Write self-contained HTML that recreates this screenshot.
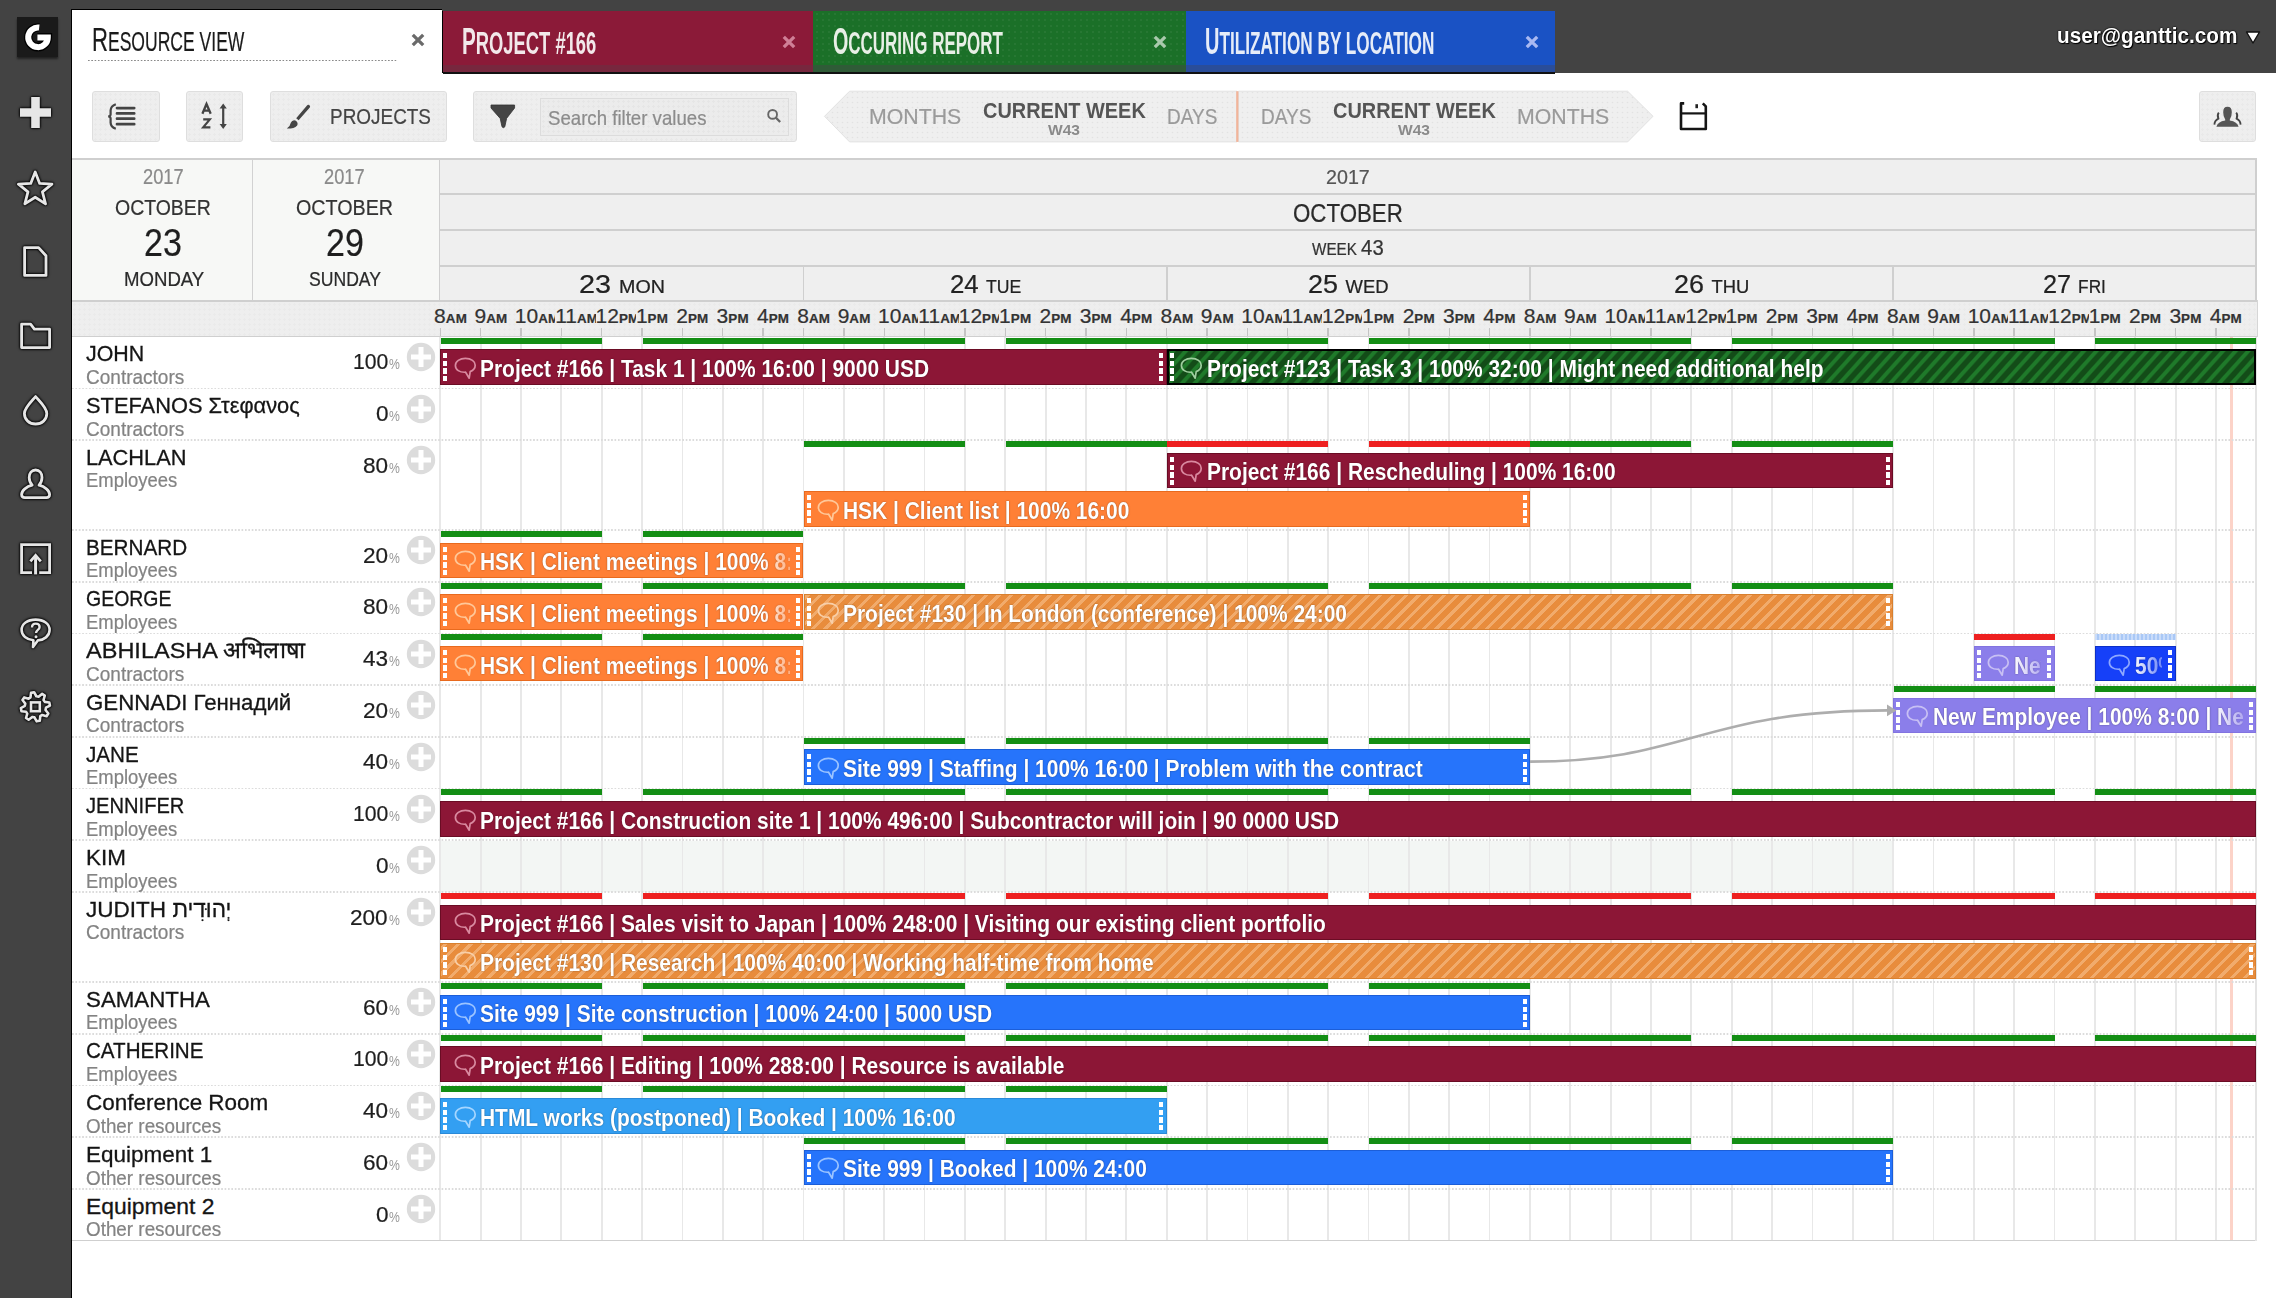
<!DOCTYPE html>
<html><head><meta charset="utf-8"><title>Ganttic Resource view</title>
<style>
html,body{margin:0;padding:0;width:2276px;height:1298px;overflow:hidden;background:#fff;font-family:"Liberation Sans", sans-serif;}
</style></head><body>
<div style="position:absolute;left:0.00px;top:0.00px;width:2276.00px;height:73.00px;background:#434343"></div>
<div style="position:absolute;left:0.00px;top:0.00px;width:72.00px;height:1298.00px;background:#434343"></div>
<div style="position:absolute;left:70.50px;top:9.00px;width:1.60px;height:1289.00px;background:#000"></div>
<div style="position:absolute;left:17.00px;top:17.00px;width:41.00px;height:40.00px;background:#1a1a1a;box-shadow:0 2px 2px rgba(0,0,0,.5)"></div>
<svg style="position:absolute;left:17px;top:17px" width="41" height="40" viewBox="0 0 41 40">
<path d="M22.2 10.6 A9.8 9.8 0 1 0 30.8 20.4 L20.4 20.4" fill="none" stroke="#000" stroke-width="8.6" stroke-linecap="butt"/>
<path d="M22.2 10.6 A9.8 9.8 0 1 0 30.8 20.4 L20.4 20.4" fill="none" stroke="#fff" stroke-width="6" stroke-linecap="butt"/>
</svg>
<div style="position:absolute;left:72.00px;top:9.00px;width:369.50px;height:64.00px;background:#fff;border-top:1.5px solid #000"></div>
<div style="position:absolute;left:441.50px;top:11.00px;width:1.50px;height:62.00px;background:#000"></div>
<div style="position:absolute;left:443.00px;top:11.00px;width:370.00px;height:62.00px;background:#8b1a38"></div>
<div style="position:absolute;left:443.00px;top:64.50px;width:370.00px;height:8.00px;background:#732a40;opacity:.85"></div>
<div style="position:absolute;left:813.00px;top:11.00px;width:373.00px;height:62.00px;background:#1b7028"></div>
<div style="position:absolute;left:813.00px;top:64.50px;width:373.00px;height:8.00px;background:#33573a;opacity:.85"></div>
<div style="position:absolute;left:1186.00px;top:11.00px;width:369.00px;height:62.00px;background:#1a52c4"></div>
<div style="position:absolute;left:1186.00px;top:64.50px;width:369.00px;height:8.00px;background:#2e4c92;opacity:.85"></div>
<div style="position:absolute;left:443.00px;top:72.00px;width:1112.00px;height:1.50px;background:#111"></div>
<div style="position:absolute;left:814.00px;top:11.00px;width:370.00px;height:53.00px;background-image:radial-gradient(rgba(255,255,255,.05) 1px, transparent 1.3px);background-size:6px 6px"></div>
<div style="position:absolute;left:88.00px;top:59.50px;width:310.00px;height:1.50px;background-image:linear-gradient(90deg,#8a8a8a 50%,transparent 50%);background-size:3.3px 1.5px"></div>
<div style="position:absolute;left:91.80px;top:22.00px;white-space:nowrap;line-height:1;font-size:34px;font-weight:normal;color:#1a1a1a;transform-origin:0 0;transform:scaleX(0.6496);;-webkit-text-stroke:0.22px #1a1a1a"><span style="font-size:34px">R</span><span style="font-size:27px">ESOURCE VIEW</span></div>
<div style="position:absolute;left:462.00px;top:23.80px;white-space:nowrap;line-height:1;font-size:36px;font-weight:bold;color:#f2e8ea;transform-origin:0 0;transform:scaleX(0.5742);"><span style="font-size:36px">P</span><span style="font-size:32px">ROJECT #166</span></div>
<div style="position:absolute;left:833.20px;top:24.00px;white-space:nowrap;line-height:1;font-size:36px;font-weight:bold;color:#e8efe6;transform-origin:0 0;transform:scaleX(0.5469);"><span style="font-size:36px">O</span><span style="font-size:31px">CCURING REPORT</span></div>
<div style="position:absolute;left:1205.20px;top:24.00px;white-space:nowrap;line-height:1;font-size:36px;font-weight:bold;color:#e6ecf8;transform-origin:0 0;transform:scaleX(0.5546);"><span style="font-size:36px">U</span><span style="font-size:31px">TILIZATION BY LOCATION</span></div>
<svg style="position:absolute;left:407.8px;top:30.3px" width="20" height="20" viewBox="0 0 20 20"><path d="M4.8 4.8 L15.2 15.2 M15.2 4.8 L4.8 15.2" stroke="#6a6a6a" stroke-width="3.3" stroke-linecap="butt"/></svg>
<svg style="position:absolute;left:779.1px;top:32.0px" width="20" height="20" viewBox="0 0 20 20"><path d="M4.8 4.8 L15.2 15.2 M15.2 4.8 L4.8 15.2" stroke="#cf7f96" stroke-width="3.3" stroke-linecap="butt"/></svg>
<svg style="position:absolute;left:1150.2px;top:32.0px" width="20" height="20" viewBox="0 0 20 20"><path d="M4.8 4.8 L15.2 15.2 M15.2 4.8 L4.8 15.2" stroke="#a9c9ac" stroke-width="3.3" stroke-linecap="butt"/></svg>
<svg style="position:absolute;left:1522.2px;top:32.0px" width="20" height="20" viewBox="0 0 20 20"><path d="M4.8 4.8 L15.2 15.2 M15.2 4.8 L4.8 15.2" stroke="#a9b9f2" stroke-width="3.3" stroke-linecap="butt"/></svg>
<div style="position:absolute;left:2056.50px;top:26.20px;white-space:nowrap;line-height:1;font-size:21.5px;font-weight:bold;color:#fff;transform-origin:0 0;transform:scaleX(0.9650);text-shadow:0 0 1.5px #000,0 0 1.5px #000,1px 1px 1px #000">user@ganttic.com</div>
<svg style="position:absolute;left:2244px;top:30px" width="18" height="15" viewBox="0 0 18 15"><path d="M2.5 2 L15.5 2 L9 13 Z" fill="#fff" stroke="#111" stroke-width="1.4" stroke-linejoin="round"/></svg>
<div style="position:absolute;left:92.00px;top:91.00px;width:68.00px;height:51.00px;background:#eeeeee;border:1px solid #dedede;border-radius:3px;box-sizing:border-box;background-image:radial-gradient(rgba(0,0,0,.02) 1px, transparent 1.3px);background-size:5px 5px"></div>
<div style="position:absolute;left:185.50px;top:91.00px;width:57.50px;height:51.00px;background:#eeeeee;border:1px solid #dedede;border-radius:3px;box-sizing:border-box;background-image:radial-gradient(rgba(0,0,0,.02) 1px, transparent 1.3px);background-size:5px 5px"></div>
<div style="position:absolute;left:269.50px;top:91.00px;width:177.50px;height:51.00px;background:#eeeeee;border:1px solid #dedede;border-radius:3px;box-sizing:border-box;background-image:radial-gradient(rgba(0,0,0,.02) 1px, transparent 1.3px);background-size:5px 5px"></div>
<div style="position:absolute;left:473.00px;top:91.00px;width:324.00px;height:50.50px;background:#eeeeee;border:1px solid #dedede;border-radius:3px;box-sizing:border-box;background-image:radial-gradient(rgba(0,0,0,.02) 1px, transparent 1.3px);background-size:5px 5px"></div>
<div style="position:absolute;left:539.50px;top:97.50px;width:249.50px;height:38.00px;background:#ececec;border:1px solid #dcdcdc;box-sizing:border-box;background-image:radial-gradient(rgba(0,0,0,.025) 1px, transparent 1.3px);background-size:5px 5px"></div>
<div style="position:absolute;left:2199.20px;top:91.00px;width:56.80px;height:50.50px;background:#eeeeee;border:1px solid #dedede;border-radius:3px;box-sizing:border-box;background-image:radial-gradient(rgba(0,0,0,.02) 1px, transparent 1.3px);background-size:5px 5px"></div>
<svg style="position:absolute;left:100px;top:98px" width="45" height="38" viewBox="100 98 45 38">
<path d="M115.8 104.2 Q110.8 106 110.6 110.5 L110.6 114.5 Q110.4 116.3 108.2 116.4 Q110.4 116.5 110.6 118.3 L110.6 122.6 Q110.8 127.2 115.8 128.8" fill="none" stroke="#444" stroke-width="2.2"/>
<path d="M117 108.1 H134.2 M117 113.4 H134.2 M117 118.7 H134.2 M117 124.2 H134.2" stroke="#444" stroke-width="2.7" stroke-linecap="round"/>
</svg>
<svg style="position:absolute;left:195px;top:98px" width="40" height="38" viewBox="195 98 40 38">
<path d="M202.4 113.8 L206.5 104 L210.7 113.8 M203.8 110.6 H209.3" fill="none" stroke="#444" stroke-width="2.3"/>
<path d="M203.2 119.4 H209.8 L203.2 127.4 H210.4" fill="none" stroke="#444" stroke-width="2.2"/>
<path d="M223.2 107 V125.5" stroke="#444" stroke-width="2.2"/>
<path d="M219.6 108.6 L223.2 103.6 L226.8 108.6 Z M219.6 123.9 L223.2 128.9 L226.8 123.9 Z" fill="#444"/>
</svg>
<svg style="position:absolute;left:280px;top:98px" width="40" height="38" viewBox="280 98 40 38">
<path d="M309.2 105 Q310.8 106.2 309.8 107.6 L298.6 120.2 L296.2 118.2 L307 105.6 Q308 104.2 309.2 105 Z" fill="#444"/>
<path d="M295.4 120.4 Q298.6 122.2 297.2 125.4 Q294.2 128.8 286.8 128.6 Q290.2 126.6 290.8 122.8 Q292 119.6 295.4 120.4 Z" fill="#444"/>
</svg>
<div style="position:absolute;left:330.00px;top:106.10px;white-space:nowrap;line-height:1;font-size:21.8px;font-weight:normal;color:#444;transform-origin:0 0;transform:scaleX(0.8687);;-webkit-text-stroke:0.22px #444">PROJECTS</div>
<svg style="position:absolute;left:485px;top:98px" width="35" height="36" viewBox="485 98 35 36">
<path d="M491 105 H514.6 V108 L506.6 118.4 L504.8 126.8 Q503.4 128.6 502 126.8 L500.2 118.4 L491 108 Z" fill="#444" stroke="#333" stroke-width="0.8" stroke-linejoin="round"/>
</svg>
<div style="position:absolute;left:547.90px;top:107.60px;white-space:nowrap;line-height:1;font-size:20.2px;font-weight:normal;color:#8c8c8c;transform-origin:0 0;transform:scaleX(0.9232);;-webkit-text-stroke:0.22px #8c8c8c">Search filter values</div>
<svg style="position:absolute;left:762px;top:104px" width="24" height="24" viewBox="762 104 24 24">
<circle cx="772.6" cy="114.4" r="4.4" fill="none" stroke="#666" stroke-width="1.9"/>
<path d="M775.8 117.6 L780.2 122" stroke="#666" stroke-width="2.2"/>
</svg>
<svg style="position:absolute;left:820px;top:88px" width="840" height="58" viewBox="820 88 840 58">
<defs><pattern id="dots" width="5" height="5" patternUnits="userSpaceOnUse"><rect width="5" height="5" fill="#efefef"/><circle cx="2.5" cy="2.5" r=".8" fill="#e2e2e2"/></pattern></defs>
<path d="M824.5 116.3 L849.6 91.2 H1237 V141.9 H849.6 Z" fill="url(#dots)" stroke="#e2e2e2" stroke-width="1"/>
<path d="M1238.5 91.2 H1627.6 L1653 116.3 L1627.6 141.9 H1238.5 Z" fill="url(#dots)" stroke="#e2e2e2" stroke-width="1"/>
<rect x="1236.2" y="91.2" width="2.2" height="50.7" fill="#f2b49a"/>
</svg>
<div style="position:absolute;left:868.80px;top:105.60px;white-space:nowrap;line-height:1;font-size:21.8px;font-weight:normal;color:#9a9a9a;transform-origin:0 0;transform:scaleX(0.9761);;-webkit-text-stroke:0.22px #9a9a9a">MONTHS</div>
<div style="position:absolute;left:982.80px;top:99.70px;white-space:nowrap;line-height:1;font-size:21.8px;font-weight:bold;color:#555;transform-origin:0 0;transform:scaleX(0.9145);">CURRENT WEEK</div>
<div style="position:absolute;left:1047.90px;top:123.00px;white-space:nowrap;line-height:1;font-size:14.5px;font-weight:bold;color:#8a8a8a;transform-origin:0 0;transform:scaleX(1.0728);">W43</div>
<div style="position:absolute;left:1166.80px;top:105.60px;white-space:nowrap;line-height:1;font-size:21.8px;font-weight:normal;color:#9a9a9a;transform-origin:0 0;transform:scaleX(0.8727);;-webkit-text-stroke:0.22px #9a9a9a">DAYS</div>
<div style="position:absolute;left:1260.80px;top:105.60px;white-space:nowrap;line-height:1;font-size:21.8px;font-weight:normal;color:#9a9a9a;transform-origin:0 0;transform:scaleX(0.8727);;-webkit-text-stroke:0.22px #9a9a9a">DAYS</div>
<div style="position:absolute;left:1332.80px;top:99.70px;white-space:nowrap;line-height:1;font-size:21.8px;font-weight:bold;color:#555;transform-origin:0 0;transform:scaleX(0.9145);">CURRENT WEEK</div>
<div style="position:absolute;left:1397.80px;top:123.00px;white-space:nowrap;line-height:1;font-size:14.5px;font-weight:bold;color:#8a8a8a;transform-origin:0 0;transform:scaleX(1.0728);">W43</div>
<div style="position:absolute;left:1516.80px;top:105.60px;white-space:nowrap;line-height:1;font-size:21.8px;font-weight:normal;color:#9a9a9a;transform-origin:0 0;transform:scaleX(0.9761);;-webkit-text-stroke:0.22px #9a9a9a">MONTHS</div>
<svg style="position:absolute;left:1675px;top:98px" width="36" height="36" viewBox="1675 98 36 36">
<path d="M1684.2 103.4 H1681 V129 H1705.8 V106.4 L1702.8 103.4" fill="none" stroke="#151515" stroke-width="2.6" stroke-linejoin="round"/>
<path d="M1681 113.4 H1705.8" stroke="#151515" stroke-width="2.2"/>
<rect x="1695.4" y="104.2" width="2.6" height="4" fill="#222"/>
</svg>
<svg style="position:absolute;left:2210px;top:100px" width="36" height="32" viewBox="2210 100 36 32">
<path d="M2227.5 106.8 Q2231.8 106.8 2231.8 112.2 Q2231.8 117 2229.8 119.4 L2229.8 120.6 Q2237.4 121.8 2238.6 126.8 H2216.4 Q2217.6 121.8 2225.2 120.6 L2225.2 119.4 Q2223.2 117 2223.2 112.2 Q2223.2 106.8 2227.5 106.8 Z" fill="#555"/>
<path d="M2218.8 112.6 Q2216.8 115 2218.4 118.6 Q2214.6 120.4 2214.4 124.6" fill="none" stroke="#444" stroke-width="1.8"/>
<path d="M2236.2 112.6 Q2238.2 115 2236.6 118.6 Q2240.4 120.4 2240.6 124.6" fill="none" stroke="#444" stroke-width="1.8"/>
</svg>
<div style="position:absolute;left:72.00px;top:158.40px;width:2184.00px;height:1.60px;background:#cfcfcf"></div>
<div style="position:absolute;left:72.00px;top:160.00px;width:367.00px;height:140.60px;background:#f7f8f6"></div>
<div style="position:absolute;left:251.80px;top:160.00px;width:1.60px;height:140.60px;background:#d2d2d2"></div>
<div style="position:absolute;left:438.60px;top:158.40px;width:1.60px;height:142.60px;background:#cfcfcf"></div>
<div style="position:absolute;left:440.20px;top:160.00px;width:1815.80px;height:141.00px;background:#efefef"></div>
<div style="position:absolute;left:440.20px;top:193.40px;width:1815.80px;height:1.60px;background:#cfcfcf"></div>
<div style="position:absolute;left:440.20px;top:229.30px;width:1815.80px;height:1.60px;background:#cfcfcf"></div>
<div style="position:absolute;left:440.20px;top:265.00px;width:1815.80px;height:1.60px;background:#cfcfcf"></div>
<div style="position:absolute;left:2255.40px;top:158.40px;width:1.60px;height:143.00px;background:#cfcfcf"></div>
<div style="position:absolute;left:802.70px;top:266.60px;width:1.60px;height:34.40px;background:#cfcfcf"></div>
<div style="position:absolute;left:1165.91px;top:266.60px;width:1.60px;height:34.40px;background:#cfcfcf"></div>
<div style="position:absolute;left:1529.11px;top:266.60px;width:1.60px;height:34.40px;background:#cfcfcf"></div>
<div style="position:absolute;left:1892.32px;top:266.60px;width:1.60px;height:34.40px;background:#cfcfcf"></div>
<div style="position:absolute;left:72.00px;top:300.40px;width:2186.00px;height:1.60px;background:#cfcfcf"></div>
<div style="position:absolute;left:72.00px;top:302.00px;width:2186.00px;height:34.00px;background:#eeeeee;background-image:radial-gradient(rgba(0,0,0,.014) 1px, transparent 1.3px);background-size:5px 5px"></div>
<div style="position:absolute;left:72.00px;top:335.80px;width:2186.00px;height:1.60px;background:#cfcfcf"></div>
<div style="position:absolute;left:2256.50px;top:300.40px;width:1.50px;height:37.00px;background:#d6d6d6"></div>
<div style="position:absolute;left:439.60px;top:328.40px;width:1.40px;height:7.20px;background:#c4c4c4"></div>
<div style="position:absolute;left:479.96px;top:328.40px;width:1.40px;height:7.20px;background:#c4c4c4"></div>
<div style="position:absolute;left:520.31px;top:328.40px;width:1.40px;height:7.20px;background:#c4c4c4"></div>
<div style="position:absolute;left:560.67px;top:328.40px;width:1.40px;height:7.20px;background:#c4c4c4"></div>
<div style="position:absolute;left:601.02px;top:328.40px;width:1.40px;height:7.20px;background:#c4c4c4"></div>
<div style="position:absolute;left:641.38px;top:328.40px;width:1.40px;height:7.20px;background:#c4c4c4"></div>
<div style="position:absolute;left:681.74px;top:328.40px;width:1.40px;height:7.20px;background:#c4c4c4"></div>
<div style="position:absolute;left:722.09px;top:328.40px;width:1.40px;height:7.20px;background:#c4c4c4"></div>
<div style="position:absolute;left:762.45px;top:328.40px;width:1.40px;height:7.20px;background:#c4c4c4"></div>
<div style="position:absolute;left:802.80px;top:328.40px;width:1.40px;height:7.20px;background:#c4c4c4"></div>
<div style="position:absolute;left:843.16px;top:328.40px;width:1.40px;height:7.20px;background:#c4c4c4"></div>
<div style="position:absolute;left:883.52px;top:328.40px;width:1.40px;height:7.20px;background:#c4c4c4"></div>
<div style="position:absolute;left:923.87px;top:328.40px;width:1.40px;height:7.20px;background:#c4c4c4"></div>
<div style="position:absolute;left:964.23px;top:328.40px;width:1.40px;height:7.20px;background:#c4c4c4"></div>
<div style="position:absolute;left:1004.58px;top:328.40px;width:1.40px;height:7.20px;background:#c4c4c4"></div>
<div style="position:absolute;left:1044.94px;top:328.40px;width:1.40px;height:7.20px;background:#c4c4c4"></div>
<div style="position:absolute;left:1085.30px;top:328.40px;width:1.40px;height:7.20px;background:#c4c4c4"></div>
<div style="position:absolute;left:1125.65px;top:328.40px;width:1.40px;height:7.20px;background:#c4c4c4"></div>
<div style="position:absolute;left:1166.01px;top:328.40px;width:1.40px;height:7.20px;background:#c4c4c4"></div>
<div style="position:absolute;left:1206.36px;top:328.40px;width:1.40px;height:7.20px;background:#c4c4c4"></div>
<div style="position:absolute;left:1246.72px;top:328.40px;width:1.40px;height:7.20px;background:#c4c4c4"></div>
<div style="position:absolute;left:1287.08px;top:328.40px;width:1.40px;height:7.20px;background:#c4c4c4"></div>
<div style="position:absolute;left:1327.43px;top:328.40px;width:1.40px;height:7.20px;background:#c4c4c4"></div>
<div style="position:absolute;left:1367.79px;top:328.40px;width:1.40px;height:7.20px;background:#c4c4c4"></div>
<div style="position:absolute;left:1408.14px;top:328.40px;width:1.40px;height:7.20px;background:#c4c4c4"></div>
<div style="position:absolute;left:1448.50px;top:328.40px;width:1.40px;height:7.20px;background:#c4c4c4"></div>
<div style="position:absolute;left:1488.86px;top:328.40px;width:1.40px;height:7.20px;background:#c4c4c4"></div>
<div style="position:absolute;left:1529.21px;top:328.40px;width:1.40px;height:7.20px;background:#c4c4c4"></div>
<div style="position:absolute;left:1569.57px;top:328.40px;width:1.40px;height:7.20px;background:#c4c4c4"></div>
<div style="position:absolute;left:1609.92px;top:328.40px;width:1.40px;height:7.20px;background:#c4c4c4"></div>
<div style="position:absolute;left:1650.28px;top:328.40px;width:1.40px;height:7.20px;background:#c4c4c4"></div>
<div style="position:absolute;left:1690.64px;top:328.40px;width:1.40px;height:7.20px;background:#c4c4c4"></div>
<div style="position:absolute;left:1730.99px;top:328.40px;width:1.40px;height:7.20px;background:#c4c4c4"></div>
<div style="position:absolute;left:1771.35px;top:328.40px;width:1.40px;height:7.20px;background:#c4c4c4"></div>
<div style="position:absolute;left:1811.70px;top:328.40px;width:1.40px;height:7.20px;background:#c4c4c4"></div>
<div style="position:absolute;left:1852.06px;top:328.40px;width:1.40px;height:7.20px;background:#c4c4c4"></div>
<div style="position:absolute;left:1892.42px;top:328.40px;width:1.40px;height:7.20px;background:#c4c4c4"></div>
<div style="position:absolute;left:1932.77px;top:328.40px;width:1.40px;height:7.20px;background:#c4c4c4"></div>
<div style="position:absolute;left:1973.13px;top:328.40px;width:1.40px;height:7.20px;background:#c4c4c4"></div>
<div style="position:absolute;left:2013.48px;top:328.40px;width:1.40px;height:7.20px;background:#c4c4c4"></div>
<div style="position:absolute;left:2053.84px;top:328.40px;width:1.40px;height:7.20px;background:#c4c4c4"></div>
<div style="position:absolute;left:2094.20px;top:328.40px;width:1.40px;height:7.20px;background:#c4c4c4"></div>
<div style="position:absolute;left:2134.55px;top:328.40px;width:1.40px;height:7.20px;background:#c4c4c4"></div>
<div style="position:absolute;left:2174.91px;top:328.40px;width:1.40px;height:7.20px;background:#c4c4c4"></div>
<div style="position:absolute;left:2215.26px;top:328.40px;width:1.40px;height:7.20px;background:#c4c4c4"></div>
<div style="position:absolute;left:143.00px;top:167.10px;white-space:nowrap;line-height:1;font-size:21.4px;font-weight:normal;color:#8a8a8a;transform-origin:0 0;transform:scaleX(0.8531);;-webkit-text-stroke:0.22px #8a8a8a">2017</div>
<div style="position:absolute;left:115.40px;top:195.60px;white-space:nowrap;line-height:1;font-size:22.8px;font-weight:normal;color:#333;transform-origin:0 0;transform:scaleX(0.8537);;-webkit-text-stroke:0.22px #333">OCTOBER</div>
<div style="position:absolute;left:144.00px;top:224.10px;white-space:nowrap;line-height:1;font-size:38px;font-weight:normal;color:#1e1e1e;transform-origin:0 0;transform:scaleX(0.8940);;-webkit-text-stroke:0.22px #1e1e1e">23</div>
<div style="position:absolute;left:123.70px;top:268.60px;white-space:nowrap;line-height:1;font-size:20px;font-weight:normal;color:#2a2a2a;transform-origin:0 0;transform:scaleX(0.9303);;-webkit-text-stroke:0.22px #2a2a2a">MONDAY</div>
<div style="position:absolute;left:323.80px;top:167.10px;white-space:nowrap;line-height:1;font-size:21.4px;font-weight:normal;color:#8a8a8a;transform-origin:0 0;transform:scaleX(0.8531);;-webkit-text-stroke:0.22px #8a8a8a">2017</div>
<div style="position:absolute;left:296.00px;top:195.60px;white-space:nowrap;line-height:1;font-size:22.8px;font-weight:normal;color:#333;transform-origin:0 0;transform:scaleX(0.8635);;-webkit-text-stroke:0.22px #333">OCTOBER</div>
<div style="position:absolute;left:325.70px;top:224.10px;white-space:nowrap;line-height:1;font-size:38px;font-weight:normal;color:#1e1e1e;transform-origin:0 0;transform:scaleX(0.8940);;-webkit-text-stroke:0.22px #1e1e1e">29</div>
<div style="position:absolute;left:309.00px;top:268.60px;white-space:nowrap;line-height:1;font-size:20px;font-weight:normal;color:#2a2a2a;transform-origin:0 0;transform:scaleX(0.8794);;-webkit-text-stroke:0.22px #2a2a2a">SUNDAY</div>
<div style="position:absolute;left:1326.00px;top:166.60px;white-space:nowrap;line-height:1;font-size:20.3px;font-weight:normal;color:#555;transform-origin:0 0;transform:scaleX(0.9706);;-webkit-text-stroke:0.22px #555">2017</div>
<div style="position:absolute;left:1293.00px;top:200.60px;white-space:nowrap;line-height:1;font-size:25.5px;font-weight:normal;color:#2a2a2a;transform-origin:0 0;transform:scaleX(0.8739);;-webkit-text-stroke:0.22px #2a2a2a">OCTOBER</div>
<div style="position:absolute;left:1312.00px;top:238.30px;white-space:nowrap;line-height:1;font-size:21.3px;font-weight:normal;color:#333;transform-origin:0 0;transform:scaleX(0.9526);;-webkit-text-stroke:0.22px #333"><span style="font-size:16px">WEEK </span>43</div>
<div style="position:absolute;left:578.90px;top:270.60px;white-space:nowrap;line-height:1;font-size:26.5px;font-weight:normal;color:#222;transform-origin:0 0;transform:scaleX(1.0877);;-webkit-text-stroke:0.22px #222">23 <span style="font-size:18.1px">MON</span></div>
<div style="position:absolute;left:949.51px;top:270.60px;white-space:nowrap;line-height:1;font-size:26.5px;font-weight:normal;color:#222;transform-origin:0 0;transform:scaleX(0.9749);;-webkit-text-stroke:0.22px #222">24 <span style="font-size:18.1px">TUE</span></div>
<div style="position:absolute;left:1308.06px;top:270.60px;white-space:nowrap;line-height:1;font-size:26.5px;font-weight:normal;color:#222;transform-origin:0 0;transform:scaleX(1.0182);;-webkit-text-stroke:0.22px #222">25 <span style="font-size:18.1px">WED</span></div>
<div style="position:absolute;left:1673.91px;top:270.60px;white-space:nowrap;line-height:1;font-size:26.5px;font-weight:normal;color:#222;transform-origin:0 0;transform:scaleX(1.0158);;-webkit-text-stroke:0.22px #222">26 <span style="font-size:18.1px">THU</span></div>
<div style="position:absolute;left:2043.27px;top:270.60px;white-space:nowrap;line-height:1;font-size:26.5px;font-weight:normal;color:#222;transform-origin:0 0;transform:scaleX(0.9530);;-webkit-text-stroke:0.22px #222">27 <span style="font-size:18.1px">FRI</span></div>
<div style="position:absolute;left:434.10px;top:298.70px;width:40.40px;height:31.00px;overflow:hidden;font-size:21px;font-weight:normal;color:#333;line-height:1;;-webkit-text-stroke:0.22px #333"><div style="position:absolute;left:0;top:6px;white-space:nowrap;transform-origin:0 0;">8<span style="font-size:13.4px;font-weight:bold;letter-spacing:.2px">AM</span></div></div>
<div style="position:absolute;left:474.46px;top:298.70px;width:40.40px;height:31.00px;overflow:hidden;font-size:21px;font-weight:normal;color:#333;line-height:1;;-webkit-text-stroke:0.22px #333"><div style="position:absolute;left:0;top:6px;white-space:nowrap;transform-origin:0 0;">9<span style="font-size:13.4px;font-weight:bold;letter-spacing:.2px">AM</span></div></div>
<div style="position:absolute;left:514.81px;top:298.70px;width:40.40px;height:31.00px;overflow:hidden;font-size:21px;font-weight:normal;color:#333;line-height:1;;-webkit-text-stroke:0.22px #333"><div style="position:absolute;left:0;top:6px;white-space:nowrap;transform-origin:0 0;">10<span style="font-size:13.4px;font-weight:bold;letter-spacing:.2px">AM</span></div></div>
<div style="position:absolute;left:555.17px;top:298.70px;width:40.40px;height:31.00px;overflow:hidden;font-size:21px;font-weight:normal;color:#333;line-height:1;;-webkit-text-stroke:0.22px #333"><div style="position:absolute;left:0;top:6px;white-space:nowrap;transform-origin:0 0;">11<span style="font-size:13.4px;font-weight:bold;letter-spacing:.2px">AM</span></div></div>
<div style="position:absolute;left:595.52px;top:298.70px;width:40.40px;height:31.00px;overflow:hidden;font-size:21px;font-weight:normal;color:#333;line-height:1;;-webkit-text-stroke:0.22px #333"><div style="position:absolute;left:0;top:6px;white-space:nowrap;transform-origin:0 0;">12<span style="font-size:13.4px;font-weight:bold;letter-spacing:.2px">PM</span></div></div>
<div style="position:absolute;left:635.88px;top:298.70px;width:40.40px;height:31.00px;overflow:hidden;font-size:21px;font-weight:normal;color:#333;line-height:1;;-webkit-text-stroke:0.22px #333"><div style="position:absolute;left:0;top:6px;white-space:nowrap;transform-origin:0 0;">1<span style="font-size:13.4px;font-weight:bold;letter-spacing:.2px">PM</span></div></div>
<div style="position:absolute;left:676.24px;top:298.70px;width:40.40px;height:31.00px;overflow:hidden;font-size:21px;font-weight:normal;color:#333;line-height:1;;-webkit-text-stroke:0.22px #333"><div style="position:absolute;left:0;top:6px;white-space:nowrap;transform-origin:0 0;">2<span style="font-size:13.4px;font-weight:bold;letter-spacing:.2px">PM</span></div></div>
<div style="position:absolute;left:716.59px;top:298.70px;width:40.40px;height:31.00px;overflow:hidden;font-size:21px;font-weight:normal;color:#333;line-height:1;;-webkit-text-stroke:0.22px #333"><div style="position:absolute;left:0;top:6px;white-space:nowrap;transform-origin:0 0;">3<span style="font-size:13.4px;font-weight:bold;letter-spacing:.2px">PM</span></div></div>
<div style="position:absolute;left:756.95px;top:298.70px;width:40.40px;height:31.00px;overflow:hidden;font-size:21px;font-weight:normal;color:#333;line-height:1;;-webkit-text-stroke:0.22px #333"><div style="position:absolute;left:0;top:6px;white-space:nowrap;transform-origin:0 0;">4<span style="font-size:13.4px;font-weight:bold;letter-spacing:.2px">PM</span></div></div>
<div style="position:absolute;left:797.30px;top:298.70px;width:40.40px;height:31.00px;overflow:hidden;font-size:21px;font-weight:normal;color:#333;line-height:1;;-webkit-text-stroke:0.22px #333"><div style="position:absolute;left:0;top:6px;white-space:nowrap;transform-origin:0 0;">8<span style="font-size:13.4px;font-weight:bold;letter-spacing:.2px">AM</span></div></div>
<div style="position:absolute;left:837.66px;top:298.70px;width:40.40px;height:31.00px;overflow:hidden;font-size:21px;font-weight:normal;color:#333;line-height:1;;-webkit-text-stroke:0.22px #333"><div style="position:absolute;left:0;top:6px;white-space:nowrap;transform-origin:0 0;">9<span style="font-size:13.4px;font-weight:bold;letter-spacing:.2px">AM</span></div></div>
<div style="position:absolute;left:878.02px;top:298.70px;width:40.40px;height:31.00px;overflow:hidden;font-size:21px;font-weight:normal;color:#333;line-height:1;;-webkit-text-stroke:0.22px #333"><div style="position:absolute;left:0;top:6px;white-space:nowrap;transform-origin:0 0;">10<span style="font-size:13.4px;font-weight:bold;letter-spacing:.2px">AM</span></div></div>
<div style="position:absolute;left:918.37px;top:298.70px;width:40.40px;height:31.00px;overflow:hidden;font-size:21px;font-weight:normal;color:#333;line-height:1;;-webkit-text-stroke:0.22px #333"><div style="position:absolute;left:0;top:6px;white-space:nowrap;transform-origin:0 0;">11<span style="font-size:13.4px;font-weight:bold;letter-spacing:.2px">AM</span></div></div>
<div style="position:absolute;left:958.73px;top:298.70px;width:40.40px;height:31.00px;overflow:hidden;font-size:21px;font-weight:normal;color:#333;line-height:1;;-webkit-text-stroke:0.22px #333"><div style="position:absolute;left:0;top:6px;white-space:nowrap;transform-origin:0 0;">12<span style="font-size:13.4px;font-weight:bold;letter-spacing:.2px">PM</span></div></div>
<div style="position:absolute;left:999.08px;top:298.70px;width:40.40px;height:31.00px;overflow:hidden;font-size:21px;font-weight:normal;color:#333;line-height:1;;-webkit-text-stroke:0.22px #333"><div style="position:absolute;left:0;top:6px;white-space:nowrap;transform-origin:0 0;">1<span style="font-size:13.4px;font-weight:bold;letter-spacing:.2px">PM</span></div></div>
<div style="position:absolute;left:1039.44px;top:298.70px;width:40.40px;height:31.00px;overflow:hidden;font-size:21px;font-weight:normal;color:#333;line-height:1;;-webkit-text-stroke:0.22px #333"><div style="position:absolute;left:0;top:6px;white-space:nowrap;transform-origin:0 0;">2<span style="font-size:13.4px;font-weight:bold;letter-spacing:.2px">PM</span></div></div>
<div style="position:absolute;left:1079.80px;top:298.70px;width:40.40px;height:31.00px;overflow:hidden;font-size:21px;font-weight:normal;color:#333;line-height:1;;-webkit-text-stroke:0.22px #333"><div style="position:absolute;left:0;top:6px;white-space:nowrap;transform-origin:0 0;">3<span style="font-size:13.4px;font-weight:bold;letter-spacing:.2px">PM</span></div></div>
<div style="position:absolute;left:1120.15px;top:298.70px;width:40.40px;height:31.00px;overflow:hidden;font-size:21px;font-weight:normal;color:#333;line-height:1;;-webkit-text-stroke:0.22px #333"><div style="position:absolute;left:0;top:6px;white-space:nowrap;transform-origin:0 0;">4<span style="font-size:13.4px;font-weight:bold;letter-spacing:.2px">PM</span></div></div>
<div style="position:absolute;left:1160.51px;top:298.70px;width:40.40px;height:31.00px;overflow:hidden;font-size:21px;font-weight:normal;color:#333;line-height:1;;-webkit-text-stroke:0.22px #333"><div style="position:absolute;left:0;top:6px;white-space:nowrap;transform-origin:0 0;">8<span style="font-size:13.4px;font-weight:bold;letter-spacing:.2px">AM</span></div></div>
<div style="position:absolute;left:1200.86px;top:298.70px;width:40.40px;height:31.00px;overflow:hidden;font-size:21px;font-weight:normal;color:#333;line-height:1;;-webkit-text-stroke:0.22px #333"><div style="position:absolute;left:0;top:6px;white-space:nowrap;transform-origin:0 0;">9<span style="font-size:13.4px;font-weight:bold;letter-spacing:.2px">AM</span></div></div>
<div style="position:absolute;left:1241.22px;top:298.70px;width:40.40px;height:31.00px;overflow:hidden;font-size:21px;font-weight:normal;color:#333;line-height:1;;-webkit-text-stroke:0.22px #333"><div style="position:absolute;left:0;top:6px;white-space:nowrap;transform-origin:0 0;">10<span style="font-size:13.4px;font-weight:bold;letter-spacing:.2px">AM</span></div></div>
<div style="position:absolute;left:1281.58px;top:298.70px;width:40.40px;height:31.00px;overflow:hidden;font-size:21px;font-weight:normal;color:#333;line-height:1;;-webkit-text-stroke:0.22px #333"><div style="position:absolute;left:0;top:6px;white-space:nowrap;transform-origin:0 0;">11<span style="font-size:13.4px;font-weight:bold;letter-spacing:.2px">AM</span></div></div>
<div style="position:absolute;left:1321.93px;top:298.70px;width:40.40px;height:31.00px;overflow:hidden;font-size:21px;font-weight:normal;color:#333;line-height:1;;-webkit-text-stroke:0.22px #333"><div style="position:absolute;left:0;top:6px;white-space:nowrap;transform-origin:0 0;">12<span style="font-size:13.4px;font-weight:bold;letter-spacing:.2px">PM</span></div></div>
<div style="position:absolute;left:1362.29px;top:298.70px;width:40.40px;height:31.00px;overflow:hidden;font-size:21px;font-weight:normal;color:#333;line-height:1;;-webkit-text-stroke:0.22px #333"><div style="position:absolute;left:0;top:6px;white-space:nowrap;transform-origin:0 0;">1<span style="font-size:13.4px;font-weight:bold;letter-spacing:.2px">PM</span></div></div>
<div style="position:absolute;left:1402.64px;top:298.70px;width:40.40px;height:31.00px;overflow:hidden;font-size:21px;font-weight:normal;color:#333;line-height:1;;-webkit-text-stroke:0.22px #333"><div style="position:absolute;left:0;top:6px;white-space:nowrap;transform-origin:0 0;">2<span style="font-size:13.4px;font-weight:bold;letter-spacing:.2px">PM</span></div></div>
<div style="position:absolute;left:1443.00px;top:298.70px;width:40.40px;height:31.00px;overflow:hidden;font-size:21px;font-weight:normal;color:#333;line-height:1;;-webkit-text-stroke:0.22px #333"><div style="position:absolute;left:0;top:6px;white-space:nowrap;transform-origin:0 0;">3<span style="font-size:13.4px;font-weight:bold;letter-spacing:.2px">PM</span></div></div>
<div style="position:absolute;left:1483.36px;top:298.70px;width:40.40px;height:31.00px;overflow:hidden;font-size:21px;font-weight:normal;color:#333;line-height:1;;-webkit-text-stroke:0.22px #333"><div style="position:absolute;left:0;top:6px;white-space:nowrap;transform-origin:0 0;">4<span style="font-size:13.4px;font-weight:bold;letter-spacing:.2px">PM</span></div></div>
<div style="position:absolute;left:1523.71px;top:298.70px;width:40.40px;height:31.00px;overflow:hidden;font-size:21px;font-weight:normal;color:#333;line-height:1;;-webkit-text-stroke:0.22px #333"><div style="position:absolute;left:0;top:6px;white-space:nowrap;transform-origin:0 0;">8<span style="font-size:13.4px;font-weight:bold;letter-spacing:.2px">AM</span></div></div>
<div style="position:absolute;left:1564.07px;top:298.70px;width:40.40px;height:31.00px;overflow:hidden;font-size:21px;font-weight:normal;color:#333;line-height:1;;-webkit-text-stroke:0.22px #333"><div style="position:absolute;left:0;top:6px;white-space:nowrap;transform-origin:0 0;">9<span style="font-size:13.4px;font-weight:bold;letter-spacing:.2px">AM</span></div></div>
<div style="position:absolute;left:1604.42px;top:298.70px;width:40.40px;height:31.00px;overflow:hidden;font-size:21px;font-weight:normal;color:#333;line-height:1;;-webkit-text-stroke:0.22px #333"><div style="position:absolute;left:0;top:6px;white-space:nowrap;transform-origin:0 0;">10<span style="font-size:13.4px;font-weight:bold;letter-spacing:.2px">AM</span></div></div>
<div style="position:absolute;left:1644.78px;top:298.70px;width:40.40px;height:31.00px;overflow:hidden;font-size:21px;font-weight:normal;color:#333;line-height:1;;-webkit-text-stroke:0.22px #333"><div style="position:absolute;left:0;top:6px;white-space:nowrap;transform-origin:0 0;">11<span style="font-size:13.4px;font-weight:bold;letter-spacing:.2px">AM</span></div></div>
<div style="position:absolute;left:1685.14px;top:298.70px;width:40.40px;height:31.00px;overflow:hidden;font-size:21px;font-weight:normal;color:#333;line-height:1;;-webkit-text-stroke:0.22px #333"><div style="position:absolute;left:0;top:6px;white-space:nowrap;transform-origin:0 0;">12<span style="font-size:13.4px;font-weight:bold;letter-spacing:.2px">PM</span></div></div>
<div style="position:absolute;left:1725.49px;top:298.70px;width:40.40px;height:31.00px;overflow:hidden;font-size:21px;font-weight:normal;color:#333;line-height:1;;-webkit-text-stroke:0.22px #333"><div style="position:absolute;left:0;top:6px;white-space:nowrap;transform-origin:0 0;">1<span style="font-size:13.4px;font-weight:bold;letter-spacing:.2px">PM</span></div></div>
<div style="position:absolute;left:1765.85px;top:298.70px;width:40.40px;height:31.00px;overflow:hidden;font-size:21px;font-weight:normal;color:#333;line-height:1;;-webkit-text-stroke:0.22px #333"><div style="position:absolute;left:0;top:6px;white-space:nowrap;transform-origin:0 0;">2<span style="font-size:13.4px;font-weight:bold;letter-spacing:.2px">PM</span></div></div>
<div style="position:absolute;left:1806.20px;top:298.70px;width:40.40px;height:31.00px;overflow:hidden;font-size:21px;font-weight:normal;color:#333;line-height:1;;-webkit-text-stroke:0.22px #333"><div style="position:absolute;left:0;top:6px;white-space:nowrap;transform-origin:0 0;">3<span style="font-size:13.4px;font-weight:bold;letter-spacing:.2px">PM</span></div></div>
<div style="position:absolute;left:1846.56px;top:298.70px;width:40.40px;height:31.00px;overflow:hidden;font-size:21px;font-weight:normal;color:#333;line-height:1;;-webkit-text-stroke:0.22px #333"><div style="position:absolute;left:0;top:6px;white-space:nowrap;transform-origin:0 0;">4<span style="font-size:13.4px;font-weight:bold;letter-spacing:.2px">PM</span></div></div>
<div style="position:absolute;left:1886.92px;top:298.70px;width:40.40px;height:31.00px;overflow:hidden;font-size:21px;font-weight:normal;color:#333;line-height:1;;-webkit-text-stroke:0.22px #333"><div style="position:absolute;left:0;top:6px;white-space:nowrap;transform-origin:0 0;">8<span style="font-size:13.4px;font-weight:bold;letter-spacing:.2px">AM</span></div></div>
<div style="position:absolute;left:1927.27px;top:298.70px;width:40.40px;height:31.00px;overflow:hidden;font-size:21px;font-weight:normal;color:#333;line-height:1;;-webkit-text-stroke:0.22px #333"><div style="position:absolute;left:0;top:6px;white-space:nowrap;transform-origin:0 0;">9<span style="font-size:13.4px;font-weight:bold;letter-spacing:.2px">AM</span></div></div>
<div style="position:absolute;left:1967.63px;top:298.70px;width:40.40px;height:31.00px;overflow:hidden;font-size:21px;font-weight:normal;color:#333;line-height:1;;-webkit-text-stroke:0.22px #333"><div style="position:absolute;left:0;top:6px;white-space:nowrap;transform-origin:0 0;">10<span style="font-size:13.4px;font-weight:bold;letter-spacing:.2px">AM</span></div></div>
<div style="position:absolute;left:2007.98px;top:298.70px;width:40.40px;height:31.00px;overflow:hidden;font-size:21px;font-weight:normal;color:#333;line-height:1;;-webkit-text-stroke:0.22px #333"><div style="position:absolute;left:0;top:6px;white-space:nowrap;transform-origin:0 0;">11<span style="font-size:13.4px;font-weight:bold;letter-spacing:.2px">AM</span></div></div>
<div style="position:absolute;left:2048.34px;top:298.70px;width:40.40px;height:31.00px;overflow:hidden;font-size:21px;font-weight:normal;color:#333;line-height:1;;-webkit-text-stroke:0.22px #333"><div style="position:absolute;left:0;top:6px;white-space:nowrap;transform-origin:0 0;">12<span style="font-size:13.4px;font-weight:bold;letter-spacing:.2px">PM</span></div></div>
<div style="position:absolute;left:2088.70px;top:298.70px;width:40.40px;height:31.00px;overflow:hidden;font-size:21px;font-weight:normal;color:#333;line-height:1;;-webkit-text-stroke:0.22px #333"><div style="position:absolute;left:0;top:6px;white-space:nowrap;transform-origin:0 0;">1<span style="font-size:13.4px;font-weight:bold;letter-spacing:.2px">PM</span></div></div>
<div style="position:absolute;left:2129.05px;top:298.70px;width:40.40px;height:31.00px;overflow:hidden;font-size:21px;font-weight:normal;color:#333;line-height:1;;-webkit-text-stroke:0.22px #333"><div style="position:absolute;left:0;top:6px;white-space:nowrap;transform-origin:0 0;">2<span style="font-size:13.4px;font-weight:bold;letter-spacing:.2px">PM</span></div></div>
<div style="position:absolute;left:2169.41px;top:298.70px;width:40.40px;height:31.00px;overflow:hidden;font-size:21px;font-weight:normal;color:#333;line-height:1;;-webkit-text-stroke:0.22px #333"><div style="position:absolute;left:0;top:6px;white-space:nowrap;transform-origin:0 0;">3<span style="font-size:13.4px;font-weight:bold;letter-spacing:.2px">PM</span></div></div>
<div style="position:absolute;left:2209.76px;top:298.70px;width:40.40px;height:31.00px;overflow:hidden;font-size:21px;font-weight:normal;color:#333;line-height:1;;-webkit-text-stroke:0.22px #333"><div style="position:absolute;left:0;top:6px;white-space:nowrap;transform-origin:0 0;">4<span style="font-size:13.4px;font-weight:bold;letter-spacing:.2px">PM</span></div></div>
<div style="position:absolute;left:72.00px;top:337.40px;width:2184.00px;height:903.30px;background:#fff"></div>
<div style="position:absolute;left:440.30px;top:841.30px;width:1452.82px;height:50.70px;background:#f3f6f4"></div>
<div style="position:absolute;left:2230.00px;top:337.40px;width:3.40px;height:903.30px;background:#fcd3c8"></div>
<div style="position:absolute;left:439.40px;top:337.40px;width:1.80px;height:903.30px;background:#e8e8e8"></div>
<div style="position:absolute;left:479.76px;top:337.40px;width:1.80px;height:903.30px;background:#e8e8e8"></div>
<div style="position:absolute;left:520.11px;top:337.40px;width:1.80px;height:903.30px;background:#e8e8e8"></div>
<div style="position:absolute;left:560.47px;top:337.40px;width:1.80px;height:903.30px;background:#e8e8e8"></div>
<div style="position:absolute;left:600.82px;top:337.40px;width:1.80px;height:903.30px;background:#e8e8e8"></div>
<div style="position:absolute;left:641.18px;top:337.40px;width:1.80px;height:903.30px;background:#e8e8e8"></div>
<div style="position:absolute;left:681.54px;top:337.40px;width:1.80px;height:903.30px;background:#e8e8e8"></div>
<div style="position:absolute;left:721.89px;top:337.40px;width:1.80px;height:903.30px;background:#e8e8e8"></div>
<div style="position:absolute;left:762.25px;top:337.40px;width:1.80px;height:903.30px;background:#e8e8e8"></div>
<div style="position:absolute;left:802.60px;top:337.40px;width:1.80px;height:903.30px;background:#e8e8e8"></div>
<div style="position:absolute;left:842.96px;top:337.40px;width:1.80px;height:903.30px;background:#e8e8e8"></div>
<div style="position:absolute;left:883.32px;top:337.40px;width:1.80px;height:903.30px;background:#e8e8e8"></div>
<div style="position:absolute;left:923.67px;top:337.40px;width:1.80px;height:903.30px;background:#e8e8e8"></div>
<div style="position:absolute;left:964.03px;top:337.40px;width:1.80px;height:903.30px;background:#e8e8e8"></div>
<div style="position:absolute;left:1004.38px;top:337.40px;width:1.80px;height:903.30px;background:#e8e8e8"></div>
<div style="position:absolute;left:1044.74px;top:337.40px;width:1.80px;height:903.30px;background:#e8e8e8"></div>
<div style="position:absolute;left:1085.10px;top:337.40px;width:1.80px;height:903.30px;background:#e8e8e8"></div>
<div style="position:absolute;left:1125.45px;top:337.40px;width:1.80px;height:903.30px;background:#e8e8e8"></div>
<div style="position:absolute;left:1165.81px;top:337.40px;width:1.80px;height:903.30px;background:#e8e8e8"></div>
<div style="position:absolute;left:1206.16px;top:337.40px;width:1.80px;height:903.30px;background:#e8e8e8"></div>
<div style="position:absolute;left:1246.52px;top:337.40px;width:1.80px;height:903.30px;background:#e8e8e8"></div>
<div style="position:absolute;left:1286.88px;top:337.40px;width:1.80px;height:903.30px;background:#e8e8e8"></div>
<div style="position:absolute;left:1327.23px;top:337.40px;width:1.80px;height:903.30px;background:#e8e8e8"></div>
<div style="position:absolute;left:1367.59px;top:337.40px;width:1.80px;height:903.30px;background:#e8e8e8"></div>
<div style="position:absolute;left:1407.94px;top:337.40px;width:1.80px;height:903.30px;background:#e8e8e8"></div>
<div style="position:absolute;left:1448.30px;top:337.40px;width:1.80px;height:903.30px;background:#e8e8e8"></div>
<div style="position:absolute;left:1488.66px;top:337.40px;width:1.80px;height:903.30px;background:#e8e8e8"></div>
<div style="position:absolute;left:1529.01px;top:337.40px;width:1.80px;height:903.30px;background:#e8e8e8"></div>
<div style="position:absolute;left:1569.37px;top:337.40px;width:1.80px;height:903.30px;background:#e8e8e8"></div>
<div style="position:absolute;left:1609.72px;top:337.40px;width:1.80px;height:903.30px;background:#e8e8e8"></div>
<div style="position:absolute;left:1650.08px;top:337.40px;width:1.80px;height:903.30px;background:#e8e8e8"></div>
<div style="position:absolute;left:1690.44px;top:337.40px;width:1.80px;height:903.30px;background:#e8e8e8"></div>
<div style="position:absolute;left:1730.79px;top:337.40px;width:1.80px;height:903.30px;background:#e8e8e8"></div>
<div style="position:absolute;left:1771.15px;top:337.40px;width:1.80px;height:903.30px;background:#e8e8e8"></div>
<div style="position:absolute;left:1811.50px;top:337.40px;width:1.80px;height:903.30px;background:#e8e8e8"></div>
<div style="position:absolute;left:1851.86px;top:337.40px;width:1.80px;height:903.30px;background:#e8e8e8"></div>
<div style="position:absolute;left:1892.22px;top:337.40px;width:1.80px;height:903.30px;background:#e8e8e8"></div>
<div style="position:absolute;left:1932.57px;top:337.40px;width:1.80px;height:903.30px;background:#e8e8e8"></div>
<div style="position:absolute;left:1972.93px;top:337.40px;width:1.80px;height:903.30px;background:#e8e8e8"></div>
<div style="position:absolute;left:2013.28px;top:337.40px;width:1.80px;height:903.30px;background:#e8e8e8"></div>
<div style="position:absolute;left:2053.64px;top:337.40px;width:1.80px;height:903.30px;background:#e8e8e8"></div>
<div style="position:absolute;left:2094.00px;top:337.40px;width:1.80px;height:903.30px;background:#e8e8e8"></div>
<div style="position:absolute;left:2134.35px;top:337.40px;width:1.80px;height:903.30px;background:#e8e8e8"></div>
<div style="position:absolute;left:2174.71px;top:337.40px;width:1.80px;height:903.30px;background:#e8e8e8"></div>
<div style="position:absolute;left:2215.06px;top:337.40px;width:1.80px;height:903.30px;background:#e8e8e8"></div>
<div style="position:absolute;left:2255.42px;top:337.40px;width:1.80px;height:903.30px;background:#e8e8e8"></div>
<div style="position:absolute;left:72.00px;top:387.50px;width:2184.00px;height:1.80px;background-image:linear-gradient(90deg,#dcdcdc 50%,transparent 50%);background-size:3.4px 1.8px"></div>
<div style="position:absolute;left:72.00px;top:439.20px;width:2184.00px;height:1.80px;background-image:linear-gradient(90deg,#dcdcdc 50%,transparent 50%);background-size:3.4px 1.8px"></div>
<div style="position:absolute;left:72.00px;top:529.10px;width:2184.00px;height:1.80px;background-image:linear-gradient(90deg,#dcdcdc 50%,transparent 50%);background-size:3.4px 1.8px"></div>
<div style="position:absolute;left:72.00px;top:580.80px;width:2184.00px;height:1.80px;background-image:linear-gradient(90deg,#dcdcdc 50%,transparent 50%);background-size:3.4px 1.8px"></div>
<div style="position:absolute;left:72.00px;top:632.50px;width:2184.00px;height:1.80px;background-image:linear-gradient(90deg,#dcdcdc 50%,transparent 50%);background-size:3.4px 1.8px"></div>
<div style="position:absolute;left:72.00px;top:684.30px;width:2184.00px;height:1.80px;background-image:linear-gradient(90deg,#dcdcdc 50%,transparent 50%);background-size:3.4px 1.8px"></div>
<div style="position:absolute;left:72.00px;top:736.00px;width:2184.00px;height:1.80px;background-image:linear-gradient(90deg,#dcdcdc 50%,transparent 50%);background-size:3.4px 1.8px"></div>
<div style="position:absolute;left:72.00px;top:787.70px;width:2184.00px;height:1.80px;background-image:linear-gradient(90deg,#dcdcdc 50%,transparent 50%);background-size:3.4px 1.8px"></div>
<div style="position:absolute;left:72.00px;top:839.40px;width:2184.00px;height:1.80px;background-image:linear-gradient(90deg,#dcdcdc 50%,transparent 50%);background-size:3.4px 1.8px"></div>
<div style="position:absolute;left:72.00px;top:891.10px;width:2184.00px;height:1.80px;background-image:linear-gradient(90deg,#dcdcdc 50%,transparent 50%);background-size:3.4px 1.8px"></div>
<div style="position:absolute;left:72.00px;top:981.20px;width:2184.00px;height:1.80px;background-image:linear-gradient(90deg,#dcdcdc 50%,transparent 50%);background-size:3.4px 1.8px"></div>
<div style="position:absolute;left:72.00px;top:1032.90px;width:2184.00px;height:1.80px;background-image:linear-gradient(90deg,#dcdcdc 50%,transparent 50%);background-size:3.4px 1.8px"></div>
<div style="position:absolute;left:72.00px;top:1084.60px;width:2184.00px;height:1.80px;background-image:linear-gradient(90deg,#dcdcdc 50%,transparent 50%);background-size:3.4px 1.8px"></div>
<div style="position:absolute;left:72.00px;top:1136.40px;width:2184.00px;height:1.80px;background-image:linear-gradient(90deg,#dcdcdc 50%,transparent 50%);background-size:3.4px 1.8px"></div>
<div style="position:absolute;left:72.00px;top:1188.10px;width:2184.00px;height:1.80px;background-image:linear-gradient(90deg,#dcdcdc 50%,transparent 50%);background-size:3.4px 1.8px"></div>
<div style="position:absolute;left:72.00px;top:1239.90px;width:2184.00px;height:1.60px;background:#cfcfcf"></div>
<div style="position:absolute;left:2255.00px;top:337.40px;width:1.50px;height:903.30px;background:#e4e4e4"></div>
<div style="position:absolute;left:86.00px;top:342.30px;white-space:nowrap;line-height:1;font-size:22.9px;font-weight:normal;color:#151515;transform-origin:0 0;transform:scaleX(0.9340);-webkit-text-stroke:0.3px #151515">JOHN</div>
<div style="position:absolute;left:86.00px;top:367.90px;white-space:nowrap;line-height:1;font-size:19.9px;font-weight:normal;color:#838383;transform-origin:0 0;transform:scaleX(0.9561);;-webkit-text-stroke:0.22px #838383">Contractors</div>
<div style="position:absolute;left:352.72px;top:350.20px;white-space:nowrap;line-height:1;font-size:22.8px;font-weight:normal;color:#1e1e1e;transform-origin:0 0;transform:scaleX(0.9300);;-webkit-text-stroke:0.22px #1e1e1e">100</div>
<div style="position:absolute;left:389.20px;top:357.20px;white-space:nowrap;line-height:1;font-size:14.2px;font-weight:normal;color:#9a9a9a;transform-origin:0 0;transform:scaleX(0.8600);">%</div>
<svg style="position:absolute;left:406.2px;top:341.8px" width="30" height="30" viewBox="0 0 30 30"><circle cx="15" cy="15" r="14.2" fill="#dcdcdc"/><path d="M15 5 V25 M5 15 H25" stroke="#fff" stroke-width="5"/></svg>
<div style="position:absolute;left:86.00px;top:394.00px;white-space:nowrap;line-height:1;font-size:22.9px;font-weight:normal;color:#151515;transform-origin:0 0;transform:scaleX(0.9542);-webkit-text-stroke:0.3px #151515">STEFANOS Στεφανος</div>
<div style="position:absolute;left:86.00px;top:419.60px;white-space:nowrap;line-height:1;font-size:19.9px;font-weight:normal;color:#838383;transform-origin:0 0;transform:scaleX(0.9561);;-webkit-text-stroke:0.22px #838383">Contractors</div>
<div style="position:absolute;left:375.54px;top:401.90px;white-space:nowrap;line-height:1;font-size:22.8px;font-weight:normal;color:#1e1e1e;transform-origin:0 0;transform:scaleX(0.9900);;-webkit-text-stroke:0.22px #1e1e1e">0</div>
<div style="position:absolute;left:389.20px;top:408.90px;white-space:nowrap;line-height:1;font-size:14.2px;font-weight:normal;color:#9a9a9a;transform-origin:0 0;transform:scaleX(0.8600);">%</div>
<svg style="position:absolute;left:406.2px;top:393.5px" width="30" height="30" viewBox="0 0 30 30"><circle cx="15" cy="15" r="14.2" fill="#dcdcdc"/><path d="M15 5 V25 M5 15 H25" stroke="#fff" stroke-width="5"/></svg>
<div style="position:absolute;left:86.00px;top:445.70px;white-space:nowrap;line-height:1;font-size:22.9px;font-weight:normal;color:#151515;transform-origin:0 0;transform:scaleX(0.9508);-webkit-text-stroke:0.3px #151515">LACHLAN</div>
<div style="position:absolute;left:86.00px;top:471.30px;white-space:nowrap;line-height:1;font-size:19.9px;font-weight:normal;color:#838383;transform-origin:0 0;transform:scaleX(0.9268);;-webkit-text-stroke:0.22px #838383">Employees</div>
<div style="position:absolute;left:362.99px;top:453.60px;white-space:nowrap;line-height:1;font-size:22.8px;font-weight:normal;color:#1e1e1e;transform-origin:0 0;transform:scaleX(0.9900);;-webkit-text-stroke:0.22px #1e1e1e">80</div>
<div style="position:absolute;left:389.20px;top:460.60px;white-space:nowrap;line-height:1;font-size:14.2px;font-weight:normal;color:#9a9a9a;transform-origin:0 0;transform:scaleX(0.8600);">%</div>
<svg style="position:absolute;left:406.2px;top:445.2px" width="30" height="30" viewBox="0 0 30 30"><circle cx="15" cy="15" r="14.2" fill="#dcdcdc"/><path d="M15 5 V25 M5 15 H25" stroke="#fff" stroke-width="5"/></svg>
<div style="position:absolute;left:86.00px;top:535.60px;white-space:nowrap;line-height:1;font-size:22.9px;font-weight:normal;color:#151515;transform-origin:0 0;transform:scaleX(0.9041);-webkit-text-stroke:0.3px #151515">BERNARD</div>
<div style="position:absolute;left:86.00px;top:561.20px;white-space:nowrap;line-height:1;font-size:19.9px;font-weight:normal;color:#838383;transform-origin:0 0;transform:scaleX(0.9268);;-webkit-text-stroke:0.22px #838383">Employees</div>
<div style="position:absolute;left:362.99px;top:543.50px;white-space:nowrap;line-height:1;font-size:22.8px;font-weight:normal;color:#1e1e1e;transform-origin:0 0;transform:scaleX(0.9900);;-webkit-text-stroke:0.22px #1e1e1e">20</div>
<div style="position:absolute;left:389.20px;top:550.50px;white-space:nowrap;line-height:1;font-size:14.2px;font-weight:normal;color:#9a9a9a;transform-origin:0 0;transform:scaleX(0.8600);">%</div>
<svg style="position:absolute;left:406.2px;top:535.1px" width="30" height="30" viewBox="0 0 30 30"><circle cx="15" cy="15" r="14.2" fill="#dcdcdc"/><path d="M15 5 V25 M5 15 H25" stroke="#fff" stroke-width="5"/></svg>
<div style="position:absolute;left:86.00px;top:587.30px;white-space:nowrap;line-height:1;font-size:22.9px;font-weight:normal;color:#151515;transform-origin:0 0;transform:scaleX(0.8509);-webkit-text-stroke:0.3px #151515">GEORGE</div>
<div style="position:absolute;left:86.00px;top:612.90px;white-space:nowrap;line-height:1;font-size:19.9px;font-weight:normal;color:#838383;transform-origin:0 0;transform:scaleX(0.9268);;-webkit-text-stroke:0.22px #838383">Employees</div>
<div style="position:absolute;left:362.99px;top:595.20px;white-space:nowrap;line-height:1;font-size:22.8px;font-weight:normal;color:#1e1e1e;transform-origin:0 0;transform:scaleX(0.9900);;-webkit-text-stroke:0.22px #1e1e1e">80</div>
<div style="position:absolute;left:389.20px;top:602.20px;white-space:nowrap;line-height:1;font-size:14.2px;font-weight:normal;color:#9a9a9a;transform-origin:0 0;transform:scaleX(0.8600);">%</div>
<svg style="position:absolute;left:406.2px;top:586.8px" width="30" height="30" viewBox="0 0 30 30"><circle cx="15" cy="15" r="14.2" fill="#dcdcdc"/><path d="M15 5 V25 M5 15 H25" stroke="#fff" stroke-width="5"/></svg>
<div style="position:absolute;left:86.00px;top:639.00px;white-space:nowrap;line-height:1;font-size:22.9px;font-weight:normal;color:#151515;transform-origin:0 0;transform:scaleX(1.0277);-webkit-text-stroke:0.3px #151515">ABHILASHA अभिलाषा</div>
<div style="position:absolute;left:86.00px;top:664.60px;white-space:nowrap;line-height:1;font-size:19.9px;font-weight:normal;color:#838383;transform-origin:0 0;transform:scaleX(0.9561);;-webkit-text-stroke:0.22px #838383">Contractors</div>
<div style="position:absolute;left:362.99px;top:646.90px;white-space:nowrap;line-height:1;font-size:22.8px;font-weight:normal;color:#1e1e1e;transform-origin:0 0;transform:scaleX(0.9900);;-webkit-text-stroke:0.22px #1e1e1e">43</div>
<div style="position:absolute;left:389.20px;top:653.90px;white-space:nowrap;line-height:1;font-size:14.2px;font-weight:normal;color:#9a9a9a;transform-origin:0 0;transform:scaleX(0.8600);">%</div>
<svg style="position:absolute;left:406.2px;top:638.5px" width="30" height="30" viewBox="0 0 30 30"><circle cx="15" cy="15" r="14.2" fill="#dcdcdc"/><path d="M15 5 V25 M5 15 H25" stroke="#fff" stroke-width="5"/></svg>
<div style="position:absolute;left:86.00px;top:690.80px;white-space:nowrap;line-height:1;font-size:22.9px;font-weight:normal;color:#151515;transform-origin:0 0;transform:scaleX(0.9721);-webkit-text-stroke:0.3px #151515">GENNADI Геннадий</div>
<div style="position:absolute;left:86.00px;top:716.40px;white-space:nowrap;line-height:1;font-size:19.9px;font-weight:normal;color:#838383;transform-origin:0 0;transform:scaleX(0.9561);;-webkit-text-stroke:0.22px #838383">Contractors</div>
<div style="position:absolute;left:362.99px;top:698.70px;white-space:nowrap;line-height:1;font-size:22.8px;font-weight:normal;color:#1e1e1e;transform-origin:0 0;transform:scaleX(0.9900);;-webkit-text-stroke:0.22px #1e1e1e">20</div>
<div style="position:absolute;left:389.20px;top:705.70px;white-space:nowrap;line-height:1;font-size:14.2px;font-weight:normal;color:#9a9a9a;transform-origin:0 0;transform:scaleX(0.8600);">%</div>
<svg style="position:absolute;left:406.2px;top:690.3px" width="30" height="30" viewBox="0 0 30 30"><circle cx="15" cy="15" r="14.2" fill="#dcdcdc"/><path d="M15 5 V25 M5 15 H25" stroke="#fff" stroke-width="5"/></svg>
<div style="position:absolute;left:86.00px;top:742.50px;white-space:nowrap;line-height:1;font-size:22.9px;font-weight:normal;color:#151515;transform-origin:0 0;transform:scaleX(0.9023);-webkit-text-stroke:0.3px #151515">JANE</div>
<div style="position:absolute;left:86.00px;top:768.10px;white-space:nowrap;line-height:1;font-size:19.9px;font-weight:normal;color:#838383;transform-origin:0 0;transform:scaleX(0.9268);;-webkit-text-stroke:0.22px #838383">Employees</div>
<div style="position:absolute;left:362.99px;top:750.40px;white-space:nowrap;line-height:1;font-size:22.8px;font-weight:normal;color:#1e1e1e;transform-origin:0 0;transform:scaleX(0.9900);;-webkit-text-stroke:0.22px #1e1e1e">40</div>
<div style="position:absolute;left:389.20px;top:757.40px;white-space:nowrap;line-height:1;font-size:14.2px;font-weight:normal;color:#9a9a9a;transform-origin:0 0;transform:scaleX(0.8600);">%</div>
<svg style="position:absolute;left:406.2px;top:742.0px" width="30" height="30" viewBox="0 0 30 30"><circle cx="15" cy="15" r="14.2" fill="#dcdcdc"/><path d="M15 5 V25 M5 15 H25" stroke="#fff" stroke-width="5"/></svg>
<div style="position:absolute;left:86.00px;top:794.20px;white-space:nowrap;line-height:1;font-size:22.9px;font-weight:normal;color:#151515;transform-origin:0 0;transform:scaleX(0.8792);-webkit-text-stroke:0.3px #151515">JENNIFER</div>
<div style="position:absolute;left:86.00px;top:819.80px;white-space:nowrap;line-height:1;font-size:19.9px;font-weight:normal;color:#838383;transform-origin:0 0;transform:scaleX(0.9268);;-webkit-text-stroke:0.22px #838383">Employees</div>
<div style="position:absolute;left:352.72px;top:802.10px;white-space:nowrap;line-height:1;font-size:22.8px;font-weight:normal;color:#1e1e1e;transform-origin:0 0;transform:scaleX(0.9300);;-webkit-text-stroke:0.22px #1e1e1e">100</div>
<div style="position:absolute;left:389.20px;top:809.10px;white-space:nowrap;line-height:1;font-size:14.2px;font-weight:normal;color:#9a9a9a;transform-origin:0 0;transform:scaleX(0.8600);">%</div>
<svg style="position:absolute;left:406.2px;top:793.7px" width="30" height="30" viewBox="0 0 30 30"><circle cx="15" cy="15" r="14.2" fill="#dcdcdc"/><path d="M15 5 V25 M5 15 H25" stroke="#fff" stroke-width="5"/></svg>
<div style="position:absolute;left:86.00px;top:845.90px;white-space:nowrap;line-height:1;font-size:22.9px;font-weight:normal;color:#151515;transform-origin:0 0;transform:scaleX(0.9803);-webkit-text-stroke:0.3px #151515">KIM</div>
<div style="position:absolute;left:86.00px;top:871.50px;white-space:nowrap;line-height:1;font-size:19.9px;font-weight:normal;color:#838383;transform-origin:0 0;transform:scaleX(0.9268);;-webkit-text-stroke:0.22px #838383">Employees</div>
<div style="position:absolute;left:375.54px;top:853.80px;white-space:nowrap;line-height:1;font-size:22.8px;font-weight:normal;color:#1e1e1e;transform-origin:0 0;transform:scaleX(0.9900);;-webkit-text-stroke:0.22px #1e1e1e">0</div>
<div style="position:absolute;left:389.20px;top:860.80px;white-space:nowrap;line-height:1;font-size:14.2px;font-weight:normal;color:#9a9a9a;transform-origin:0 0;transform:scaleX(0.8600);">%</div>
<svg style="position:absolute;left:406.2px;top:845.4px" width="30" height="30" viewBox="0 0 30 30"><circle cx="15" cy="15" r="14.2" fill="#dcdcdc"/><path d="M15 5 V25 M5 15 H25" stroke="#fff" stroke-width="5"/></svg>
<div style="position:absolute;left:86.00px;top:897.60px;white-space:nowrap;line-height:1;font-size:22.9px;font-weight:normal;color:#151515;transform-origin:0 0;transform:scaleX(0.9845);-webkit-text-stroke:0.3px #151515">JUDITH יְהוּדִית</div>
<div style="position:absolute;left:86.00px;top:923.20px;white-space:nowrap;line-height:1;font-size:19.9px;font-weight:normal;color:#838383;transform-origin:0 0;transform:scaleX(0.9561);;-webkit-text-stroke:0.22px #838383">Contractors</div>
<div style="position:absolute;left:350.43px;top:905.50px;white-space:nowrap;line-height:1;font-size:22.8px;font-weight:normal;color:#1e1e1e;transform-origin:0 0;transform:scaleX(0.9900);;-webkit-text-stroke:0.22px #1e1e1e">200</div>
<div style="position:absolute;left:389.20px;top:912.50px;white-space:nowrap;line-height:1;font-size:14.2px;font-weight:normal;color:#9a9a9a;transform-origin:0 0;transform:scaleX(0.8600);">%</div>
<svg style="position:absolute;left:406.2px;top:897.1px" width="30" height="30" viewBox="0 0 30 30"><circle cx="15" cy="15" r="14.2" fill="#dcdcdc"/><path d="M15 5 V25 M5 15 H25" stroke="#fff" stroke-width="5"/></svg>
<div style="position:absolute;left:86.00px;top:987.70px;white-space:nowrap;line-height:1;font-size:22.9px;font-weight:normal;color:#151515;transform-origin:0 0;transform:scaleX(0.9749);-webkit-text-stroke:0.3px #151515">SAMANTHA</div>
<div style="position:absolute;left:86.00px;top:1013.30px;white-space:nowrap;line-height:1;font-size:19.9px;font-weight:normal;color:#838383;transform-origin:0 0;transform:scaleX(0.9268);;-webkit-text-stroke:0.22px #838383">Employees</div>
<div style="position:absolute;left:362.99px;top:995.60px;white-space:nowrap;line-height:1;font-size:22.8px;font-weight:normal;color:#1e1e1e;transform-origin:0 0;transform:scaleX(0.9900);;-webkit-text-stroke:0.22px #1e1e1e">60</div>
<div style="position:absolute;left:389.20px;top:1002.60px;white-space:nowrap;line-height:1;font-size:14.2px;font-weight:normal;color:#9a9a9a;transform-origin:0 0;transform:scaleX(0.8600);">%</div>
<svg style="position:absolute;left:406.2px;top:987.2px" width="30" height="30" viewBox="0 0 30 30"><circle cx="15" cy="15" r="14.2" fill="#dcdcdc"/><path d="M15 5 V25 M5 15 H25" stroke="#fff" stroke-width="5"/></svg>
<div style="position:absolute;left:86.00px;top:1039.40px;white-space:nowrap;line-height:1;font-size:22.9px;font-weight:normal;color:#151515;transform-origin:0 0;transform:scaleX(0.8998);-webkit-text-stroke:0.3px #151515">CATHERINE</div>
<div style="position:absolute;left:86.00px;top:1065.00px;white-space:nowrap;line-height:1;font-size:19.9px;font-weight:normal;color:#838383;transform-origin:0 0;transform:scaleX(0.9268);;-webkit-text-stroke:0.22px #838383">Employees</div>
<div style="position:absolute;left:352.72px;top:1047.30px;white-space:nowrap;line-height:1;font-size:22.8px;font-weight:normal;color:#1e1e1e;transform-origin:0 0;transform:scaleX(0.9300);;-webkit-text-stroke:0.22px #1e1e1e">100</div>
<div style="position:absolute;left:389.20px;top:1054.30px;white-space:nowrap;line-height:1;font-size:14.2px;font-weight:normal;color:#9a9a9a;transform-origin:0 0;transform:scaleX(0.8600);">%</div>
<svg style="position:absolute;left:406.2px;top:1038.9px" width="30" height="30" viewBox="0 0 30 30"><circle cx="15" cy="15" r="14.2" fill="#dcdcdc"/><path d="M15 5 V25 M5 15 H25" stroke="#fff" stroke-width="5"/></svg>
<div style="position:absolute;left:86.00px;top:1091.10px;white-space:nowrap;line-height:1;font-size:22.9px;font-weight:normal;color:#151515;transform-origin:0 0;transform:scaleX(0.9813);-webkit-text-stroke:0.3px #151515">Conference Room</div>
<div style="position:absolute;left:86.00px;top:1116.70px;white-space:nowrap;line-height:1;font-size:19.9px;font-weight:normal;color:#838383;transform-origin:0 0;transform:scaleX(0.9473);;-webkit-text-stroke:0.22px #838383">Other resources</div>
<div style="position:absolute;left:362.99px;top:1099.00px;white-space:nowrap;line-height:1;font-size:22.8px;font-weight:normal;color:#1e1e1e;transform-origin:0 0;transform:scaleX(0.9900);;-webkit-text-stroke:0.22px #1e1e1e">40</div>
<div style="position:absolute;left:389.20px;top:1106.00px;white-space:nowrap;line-height:1;font-size:14.2px;font-weight:normal;color:#9a9a9a;transform-origin:0 0;transform:scaleX(0.8600);">%</div>
<svg style="position:absolute;left:406.2px;top:1090.6px" width="30" height="30" viewBox="0 0 30 30"><circle cx="15" cy="15" r="14.2" fill="#dcdcdc"/><path d="M15 5 V25 M5 15 H25" stroke="#fff" stroke-width="5"/></svg>
<div style="position:absolute;left:86.00px;top:1142.90px;white-space:nowrap;line-height:1;font-size:22.9px;font-weight:normal;color:#151515;transform-origin:0 0;transform:scaleX(0.9826);-webkit-text-stroke:0.3px #151515">Equipment 1</div>
<div style="position:absolute;left:86.00px;top:1168.50px;white-space:nowrap;line-height:1;font-size:19.9px;font-weight:normal;color:#838383;transform-origin:0 0;transform:scaleX(0.9473);;-webkit-text-stroke:0.22px #838383">Other resources</div>
<div style="position:absolute;left:362.99px;top:1150.80px;white-space:nowrap;line-height:1;font-size:22.8px;font-weight:normal;color:#1e1e1e;transform-origin:0 0;transform:scaleX(0.9900);;-webkit-text-stroke:0.22px #1e1e1e">60</div>
<div style="position:absolute;left:389.20px;top:1157.80px;white-space:nowrap;line-height:1;font-size:14.2px;font-weight:normal;color:#9a9a9a;transform-origin:0 0;transform:scaleX(0.8600);">%</div>
<svg style="position:absolute;left:406.2px;top:1142.4px" width="30" height="30" viewBox="0 0 30 30"><circle cx="15" cy="15" r="14.2" fill="#dcdcdc"/><path d="M15 5 V25 M5 15 H25" stroke="#fff" stroke-width="5"/></svg>
<div style="position:absolute;left:86.00px;top:1194.60px;white-space:nowrap;line-height:1;font-size:22.9px;font-weight:normal;color:#151515;transform-origin:0 0;-webkit-text-stroke:0.3px #151515">Equipment 2</div>
<div style="position:absolute;left:86.00px;top:1220.20px;white-space:nowrap;line-height:1;font-size:19.9px;font-weight:normal;color:#838383;transform-origin:0 0;transform:scaleX(0.9473);;-webkit-text-stroke:0.22px #838383">Other resources</div>
<div style="position:absolute;left:375.54px;top:1202.50px;white-space:nowrap;line-height:1;font-size:22.8px;font-weight:normal;color:#1e1e1e;transform-origin:0 0;transform:scaleX(0.9900);;-webkit-text-stroke:0.22px #1e1e1e">0</div>
<div style="position:absolute;left:389.20px;top:1209.50px;white-space:nowrap;line-height:1;font-size:14.2px;font-weight:normal;color:#9a9a9a;transform-origin:0 0;transform:scaleX(0.8600);">%</div>
<svg style="position:absolute;left:406.2px;top:1194.1px" width="30" height="30" viewBox="0 0 30 30"><circle cx="15" cy="15" r="14.2" fill="#dcdcdc"/><path d="M15 5 V25 M5 15 H25" stroke="#fff" stroke-width="5"/></svg>
<div style="position:absolute;left:440.80px;top:337.50px;width:160.92px;height:6.00px;background:#138e14"></div>
<div style="position:absolute;left:642.58px;top:337.50px;width:322.35px;height:6.00px;background:#138e14"></div>
<div style="position:absolute;left:1005.78px;top:337.50px;width:322.35px;height:6.00px;background:#138e14"></div>
<div style="position:absolute;left:1368.99px;top:337.50px;width:322.35px;height:6.00px;background:#138e14"></div>
<div style="position:absolute;left:1732.19px;top:337.50px;width:322.35px;height:6.00px;background:#138e14"></div>
<div style="position:absolute;left:2095.40px;top:337.50px;width:160.92px;height:6.00px;background:#138e14"></div>
<div style="position:absolute;left:804.00px;top:440.90px;width:160.92px;height:6.00px;background:#138e14"></div>
<div style="position:absolute;left:1005.78px;top:440.90px;width:160.92px;height:6.00px;background:#138e14"></div>
<div style="position:absolute;left:1167.21px;top:440.90px;width:160.92px;height:6.00px;background:#ee2020"></div>
<div style="position:absolute;left:1368.99px;top:440.90px;width:160.92px;height:6.00px;background:#ee2020"></div>
<div style="position:absolute;left:1530.41px;top:440.90px;width:160.92px;height:6.00px;background:#138e14"></div>
<div style="position:absolute;left:1732.19px;top:440.90px;width:160.92px;height:6.00px;background:#138e14"></div>
<div style="position:absolute;left:440.80px;top:530.80px;width:160.92px;height:6.00px;background:#138e14"></div>
<div style="position:absolute;left:642.58px;top:530.80px;width:160.92px;height:6.00px;background:#138e14"></div>
<div style="position:absolute;left:440.80px;top:582.50px;width:160.92px;height:6.00px;background:#138e14"></div>
<div style="position:absolute;left:642.58px;top:582.50px;width:322.35px;height:6.00px;background:#138e14"></div>
<div style="position:absolute;left:1005.78px;top:582.50px;width:322.35px;height:6.00px;background:#138e14"></div>
<div style="position:absolute;left:1368.99px;top:582.50px;width:322.35px;height:6.00px;background:#138e14"></div>
<div style="position:absolute;left:1732.19px;top:582.50px;width:160.92px;height:6.00px;background:#138e14"></div>
<div style="position:absolute;left:440.80px;top:634.20px;width:160.92px;height:6.00px;background:#138e14"></div>
<div style="position:absolute;left:642.58px;top:634.20px;width:160.92px;height:6.00px;background:#138e14"></div>
<div style="position:absolute;left:1974.33px;top:634.20px;width:80.21px;height:6.00px;background:#ee2020"></div>
<div style="position:absolute;left:2095.40px;top:634.20px;width:80.21px;height:6.00px;background:#a9c8f6;background-image:repeating-linear-gradient(90deg,#c9dcfa 0 2px,transparent 2px 4px)"></div>
<div style="position:absolute;left:1893.62px;top:686.00px;width:160.92px;height:6.00px;background:#138e14"></div>
<div style="position:absolute;left:2095.40px;top:686.00px;width:160.92px;height:6.00px;background:#138e14"></div>
<div style="position:absolute;left:804.00px;top:737.70px;width:160.92px;height:6.00px;background:#138e14"></div>
<div style="position:absolute;left:1005.78px;top:737.70px;width:322.35px;height:6.00px;background:#138e14"></div>
<div style="position:absolute;left:1368.99px;top:737.70px;width:160.92px;height:6.00px;background:#138e14"></div>
<div style="position:absolute;left:440.80px;top:789.40px;width:160.92px;height:6.00px;background:#138e14"></div>
<div style="position:absolute;left:642.58px;top:789.40px;width:322.35px;height:6.00px;background:#138e14"></div>
<div style="position:absolute;left:1005.78px;top:789.40px;width:322.35px;height:6.00px;background:#138e14"></div>
<div style="position:absolute;left:1368.99px;top:789.40px;width:322.35px;height:6.00px;background:#138e14"></div>
<div style="position:absolute;left:1732.19px;top:789.40px;width:322.35px;height:6.00px;background:#138e14"></div>
<div style="position:absolute;left:2095.40px;top:789.40px;width:160.92px;height:6.00px;background:#138e14"></div>
<div style="position:absolute;left:440.80px;top:892.80px;width:160.92px;height:6.00px;background:#ee2020"></div>
<div style="position:absolute;left:642.58px;top:892.80px;width:322.35px;height:6.00px;background:#ee2020"></div>
<div style="position:absolute;left:1005.78px;top:892.80px;width:322.35px;height:6.00px;background:#ee2020"></div>
<div style="position:absolute;left:1368.99px;top:892.80px;width:322.35px;height:6.00px;background:#ee2020"></div>
<div style="position:absolute;left:1732.19px;top:892.80px;width:322.35px;height:6.00px;background:#ee2020"></div>
<div style="position:absolute;left:2095.40px;top:892.80px;width:160.92px;height:6.00px;background:#ee2020"></div>
<div style="position:absolute;left:440.80px;top:982.90px;width:160.92px;height:6.00px;background:#138e14"></div>
<div style="position:absolute;left:642.58px;top:982.90px;width:322.35px;height:6.00px;background:#138e14"></div>
<div style="position:absolute;left:1005.78px;top:982.90px;width:322.35px;height:6.00px;background:#138e14"></div>
<div style="position:absolute;left:1368.99px;top:982.90px;width:160.92px;height:6.00px;background:#138e14"></div>
<div style="position:absolute;left:440.80px;top:1034.60px;width:160.92px;height:6.00px;background:#138e14"></div>
<div style="position:absolute;left:642.58px;top:1034.60px;width:322.35px;height:6.00px;background:#138e14"></div>
<div style="position:absolute;left:1005.78px;top:1034.60px;width:322.35px;height:6.00px;background:#138e14"></div>
<div style="position:absolute;left:1368.99px;top:1034.60px;width:322.35px;height:6.00px;background:#138e14"></div>
<div style="position:absolute;left:1732.19px;top:1034.60px;width:322.35px;height:6.00px;background:#138e14"></div>
<div style="position:absolute;left:2095.40px;top:1034.60px;width:160.92px;height:6.00px;background:#138e14"></div>
<div style="position:absolute;left:440.80px;top:1086.30px;width:160.92px;height:6.00px;background:#138e14"></div>
<div style="position:absolute;left:642.58px;top:1086.30px;width:322.35px;height:6.00px;background:#138e14"></div>
<div style="position:absolute;left:1005.78px;top:1086.30px;width:160.92px;height:6.00px;background:#138e14"></div>
<div style="position:absolute;left:804.00px;top:1138.10px;width:160.92px;height:6.00px;background:#138e14"></div>
<div style="position:absolute;left:1005.78px;top:1138.10px;width:322.35px;height:6.00px;background:#138e14"></div>
<div style="position:absolute;left:1368.99px;top:1138.10px;width:322.35px;height:6.00px;background:#138e14"></div>
<div style="position:absolute;left:1732.19px;top:1138.10px;width:160.92px;height:6.00px;background:#138e14"></div>
<div style="position:absolute;left:440.30px;top:349.20px;width:726.41px;height:35.6px;box-sizing:border-box;border:1.3px solid #6a0c24;background:#8c1636"></div>
<svg style="position:absolute;left:453.50px;top:356.80px" width="24" height="24" viewBox="0 0 24 24"><path d="M11.6 15.2 C5.6 15.6 1.4 12.8 1.4 8.4 C1.4 4.4 5.8 1.4 11.4 1.4 C17.2 1.4 21.2 4.4 21.2 8.2 C21.2 11.6 18.8 13.6 16.2 14.6 L15.2 21.2 L11.6 15.2 Z" fill="none" stroke="#d98aa0" stroke-width="1.7" stroke-linejoin="round"/></svg>
<div style="position:absolute;left:480.10px;top:350.80px;width:672.91px;height:33.80px;overflow:hidden;font-size:23.8px;font-weight:bold;color:#fff;line-height:1;text-shadow:0 0 1.6px rgba(0,0,0,.5)"><div style="position:absolute;left:0;top:6px;white-space:nowrap;transform-origin:0 0;transform:scaleX(0.8800);">Project #166 | Task 1 | 100% 16:00 | 9000 USD</div></div>
<div style="position:absolute;left:1124.71px;top:350.50px;width:30px;height:33px;background:linear-gradient(90deg,#8c163600,#8c1636b0)"></div>
<div style="position:absolute;left:443.30px;top:353.30px;width:4.2px;height:29.5px;background:repeating-linear-gradient(180deg,#fff 0 5.3px,transparent 5.3px 7.7px)"></div>
<div style="position:absolute;left:1159.31px;top:353.30px;width:4.2px;height:29.5px;background:repeating-linear-gradient(180deg,#fff 0 5.3px,transparent 5.3px 7.7px)"></div>
<div style="position:absolute;left:1166.71px;top:349.20px;width:1089.61px;height:35.6px;box-sizing:border-box;border:2px solid #000;background:#14501a;background-image:repeating-linear-gradient(-48deg,#134c18 0 4.2px,#1f7a2a 5.6px 8.2px,#134c18 9.4px)"></div>
<svg style="position:absolute;left:1179.91px;top:356.80px" width="24" height="24" viewBox="0 0 24 24"><path d="M11.6 15.2 C5.6 15.6 1.4 12.8 1.4 8.4 C1.4 4.4 5.8 1.4 11.4 1.4 C17.2 1.4 21.2 4.4 21.2 8.2 C21.2 11.6 18.8 13.6 16.2 14.6 L15.2 21.2 L11.6 15.2 Z" fill="none" stroke="#9fcf9f" stroke-width="1.7" stroke-linejoin="round"/></svg>
<div style="position:absolute;left:1206.51px;top:350.80px;width:1046.11px;height:33.80px;overflow:hidden;font-size:23.8px;font-weight:bold;color:#fff;line-height:1;text-shadow:0 0 1.6px rgba(0,0,0,.5)"><div style="position:absolute;left:0;top:6px;white-space:nowrap;transform-origin:0 0;transform:scaleX(0.8800);">Project #123 | Task 3 | 100% 32:00 | Might need additional help</div></div>
<div style="position:absolute;left:1169.71px;top:353.30px;width:4.2px;height:29.5px;background:repeating-linear-gradient(180deg,#fff 0 5.3px,transparent 5.3px 7.7px)"></div>
<div style="position:absolute;left:1166.71px;top:452.60px;width:726.41px;height:35.6px;box-sizing:border-box;border:1.3px solid #6a0c24;background:#8c1636"></div>
<svg style="position:absolute;left:1179.91px;top:460.20px" width="24" height="24" viewBox="0 0 24 24"><path d="M11.6 15.2 C5.6 15.6 1.4 12.8 1.4 8.4 C1.4 4.4 5.8 1.4 11.4 1.4 C17.2 1.4 21.2 4.4 21.2 8.2 C21.2 11.6 18.8 13.6 16.2 14.6 L15.2 21.2 L11.6 15.2 Z" fill="none" stroke="#d98aa0" stroke-width="1.7" stroke-linejoin="round"/></svg>
<div style="position:absolute;left:1206.51px;top:454.20px;width:672.91px;height:33.80px;overflow:hidden;font-size:23.8px;font-weight:bold;color:#fff;line-height:1;text-shadow:0 0 1.6px rgba(0,0,0,.5)"><div style="position:absolute;left:0;top:6px;white-space:nowrap;transform-origin:0 0;transform:scaleX(0.8800);">Project #166 | Rescheduling | 100% 16:00</div></div>
<div style="position:absolute;left:1851.12px;top:453.90px;width:30px;height:33px;background:linear-gradient(90deg,#8c163600,#8c1636b0)"></div>
<div style="position:absolute;left:1169.71px;top:456.70px;width:4.2px;height:29.5px;background:repeating-linear-gradient(180deg,#fff 0 5.3px,transparent 5.3px 7.7px)"></div>
<div style="position:absolute;left:1885.72px;top:456.70px;width:4.2px;height:29.5px;background:repeating-linear-gradient(180deg,#fff 0 5.3px,transparent 5.3px 7.7px)"></div>
<div style="position:absolute;left:803.50px;top:491.30px;width:726.41px;height:35.6px;box-sizing:border-box;border:1.3px solid #e86a1e;background:#ff8036"></div>
<svg style="position:absolute;left:816.70px;top:498.90px" width="24" height="24" viewBox="0 0 24 24"><path d="M11.6 15.2 C5.6 15.6 1.4 12.8 1.4 8.4 C1.4 4.4 5.8 1.4 11.4 1.4 C17.2 1.4 21.2 4.4 21.2 8.2 C21.2 11.6 18.8 13.6 16.2 14.6 L15.2 21.2 L11.6 15.2 Z" fill="none" stroke="#ffc89a" stroke-width="1.7" stroke-linejoin="round"/></svg>
<div style="position:absolute;left:843.30px;top:492.90px;width:672.91px;height:33.80px;overflow:hidden;font-size:23.8px;font-weight:bold;color:#fff;line-height:1;text-shadow:0 0 1.6px rgba(0,0,0,.5)"><div style="position:absolute;left:0;top:6px;white-space:nowrap;transform-origin:0 0;transform:scaleX(0.8800);">HSK | Client list | 100% 16:00</div></div>
<div style="position:absolute;left:1487.91px;top:492.60px;width:30px;height:33px;background:linear-gradient(90deg,#ff803600,#ff8036b0)"></div>
<div style="position:absolute;left:806.50px;top:495.40px;width:4.2px;height:29.5px;background:repeating-linear-gradient(180deg,#fff 0 5.3px,transparent 5.3px 7.7px)"></div>
<div style="position:absolute;left:1522.51px;top:495.40px;width:4.2px;height:29.5px;background:repeating-linear-gradient(180deg,#fff 0 5.3px,transparent 5.3px 7.7px)"></div>
<div style="position:absolute;left:440.30px;top:542.50px;width:363.20px;height:35.6px;box-sizing:border-box;border:1.3px solid #e86a1e;background:#ff8036"></div>
<svg style="position:absolute;left:453.50px;top:550.10px" width="24" height="24" viewBox="0 0 24 24"><path d="M11.6 15.2 C5.6 15.6 1.4 12.8 1.4 8.4 C1.4 4.4 5.8 1.4 11.4 1.4 C17.2 1.4 21.2 4.4 21.2 8.2 C21.2 11.6 18.8 13.6 16.2 14.6 L15.2 21.2 L11.6 15.2 Z" fill="none" stroke="#ffc89a" stroke-width="1.7" stroke-linejoin="round"/></svg>
<div style="position:absolute;left:480.10px;top:544.10px;width:309.70px;height:33.80px;overflow:hidden;font-size:23.8px;font-weight:bold;color:#fff;line-height:1;text-shadow:0 0 1.6px rgba(0,0,0,.5)"><div style="position:absolute;left:0;top:6px;white-space:nowrap;transform-origin:0 0;transform:scaleX(0.8800);">HSK | Client meetings | 100% 8:00</div></div>
<div style="position:absolute;left:761.50px;top:543.80px;width:30px;height:33px;background:linear-gradient(90deg,#ff803600,#ff8036b0)"></div>
<div style="position:absolute;left:443.30px;top:546.60px;width:4.2px;height:29.5px;background:repeating-linear-gradient(180deg,#fff 0 5.3px,transparent 5.3px 7.7px)"></div>
<div style="position:absolute;left:796.10px;top:546.60px;width:4.2px;height:29.5px;background:repeating-linear-gradient(180deg,#fff 0 5.3px,transparent 5.3px 7.7px)"></div>
<div style="position:absolute;left:440.30px;top:594.20px;width:363.20px;height:35.6px;box-sizing:border-box;border:1.3px solid #e86a1e;background:#ff8036"></div>
<svg style="position:absolute;left:453.50px;top:601.80px" width="24" height="24" viewBox="0 0 24 24"><path d="M11.6 15.2 C5.6 15.6 1.4 12.8 1.4 8.4 C1.4 4.4 5.8 1.4 11.4 1.4 C17.2 1.4 21.2 4.4 21.2 8.2 C21.2 11.6 18.8 13.6 16.2 14.6 L15.2 21.2 L11.6 15.2 Z" fill="none" stroke="#ffc89a" stroke-width="1.7" stroke-linejoin="round"/></svg>
<div style="position:absolute;left:480.10px;top:595.80px;width:309.70px;height:33.80px;overflow:hidden;font-size:23.8px;font-weight:bold;color:#fff;line-height:1;text-shadow:0 0 1.6px rgba(0,0,0,.5)"><div style="position:absolute;left:0;top:6px;white-space:nowrap;transform-origin:0 0;transform:scaleX(0.8800);">HSK | Client meetings | 100% 8:00</div></div>
<div style="position:absolute;left:761.50px;top:595.50px;width:30px;height:33px;background:linear-gradient(90deg,#ff803600,#ff8036b0)"></div>
<div style="position:absolute;left:443.30px;top:598.30px;width:4.2px;height:29.5px;background:repeating-linear-gradient(180deg,#fff 0 5.3px,transparent 5.3px 7.7px)"></div>
<div style="position:absolute;left:796.10px;top:598.30px;width:4.2px;height:29.5px;background:repeating-linear-gradient(180deg,#fff 0 5.3px,transparent 5.3px 7.7px)"></div>
<div style="position:absolute;left:803.50px;top:594.20px;width:1089.61px;height:35.6px;box-sizing:border-box;border:1.3px solid #d8802f;background:#ea9141;background-image:repeating-linear-gradient(-45deg,#e88c3c 0 6px,#f1ab6c 6px 9px)"></div>
<svg style="position:absolute;left:816.70px;top:601.80px" width="24" height="24" viewBox="0 0 24 24"><path d="M11.6 15.2 C5.6 15.6 1.4 12.8 1.4 8.4 C1.4 4.4 5.8 1.4 11.4 1.4 C17.2 1.4 21.2 4.4 21.2 8.2 C21.2 11.6 18.8 13.6 16.2 14.6 L15.2 21.2 L11.6 15.2 Z" fill="none" stroke="#f8cfa8" stroke-width="1.7" stroke-linejoin="round"/></svg>
<div style="position:absolute;left:843.30px;top:595.80px;width:1036.11px;height:33.80px;overflow:hidden;font-size:23.8px;font-weight:bold;color:#fff;line-height:1;text-shadow:0 0 1.6px rgba(0,0,0,.5)"><div style="position:absolute;left:0;top:6px;white-space:nowrap;transform-origin:0 0;transform:scaleX(0.8800);">Project #130 | In London (conference) | 100% 24:00</div></div>
<div style="position:absolute;left:806.50px;top:598.30px;width:4.2px;height:29.5px;background:repeating-linear-gradient(180deg,#fff 0 5.3px,transparent 5.3px 7.7px)"></div>
<div style="position:absolute;left:1885.72px;top:598.30px;width:4.2px;height:29.5px;background:repeating-linear-gradient(180deg,#fff 0 5.3px,transparent 5.3px 7.7px)"></div>
<div style="position:absolute;left:440.30px;top:645.90px;width:363.20px;height:35.6px;box-sizing:border-box;border:1.3px solid #e86a1e;background:#ff8036"></div>
<svg style="position:absolute;left:453.50px;top:653.50px" width="24" height="24" viewBox="0 0 24 24"><path d="M11.6 15.2 C5.6 15.6 1.4 12.8 1.4 8.4 C1.4 4.4 5.8 1.4 11.4 1.4 C17.2 1.4 21.2 4.4 21.2 8.2 C21.2 11.6 18.8 13.6 16.2 14.6 L15.2 21.2 L11.6 15.2 Z" fill="none" stroke="#ffc89a" stroke-width="1.7" stroke-linejoin="round"/></svg>
<div style="position:absolute;left:480.10px;top:647.50px;width:309.70px;height:33.80px;overflow:hidden;font-size:23.8px;font-weight:bold;color:#fff;line-height:1;text-shadow:0 0 1.6px rgba(0,0,0,.5)"><div style="position:absolute;left:0;top:6px;white-space:nowrap;transform-origin:0 0;transform:scaleX(0.8800);">HSK | Client meetings | 100% 8:00</div></div>
<div style="position:absolute;left:761.50px;top:647.20px;width:30px;height:33px;background:linear-gradient(90deg,#ff803600,#ff8036b0)"></div>
<div style="position:absolute;left:443.30px;top:650.00px;width:4.2px;height:29.5px;background:repeating-linear-gradient(180deg,#fff 0 5.3px,transparent 5.3px 7.7px)"></div>
<div style="position:absolute;left:796.10px;top:650.00px;width:4.2px;height:29.5px;background:repeating-linear-gradient(180deg,#fff 0 5.3px,transparent 5.3px 7.7px)"></div>
<div style="position:absolute;left:1973.83px;top:645.90px;width:80.71px;height:35.6px;box-sizing:border-box;border:1.3px solid #8273e0;background:#8b7eea"></div>
<svg style="position:absolute;left:1987.03px;top:653.50px" width="24" height="24" viewBox="0 0 24 24"><path d="M11.6 15.2 C5.6 15.6 1.4 12.8 1.4 8.4 C1.4 4.4 5.8 1.4 11.4 1.4 C17.2 1.4 21.2 4.4 21.2 8.2 C21.2 11.6 18.8 13.6 16.2 14.6 L15.2 21.2 L11.6 15.2 Z" fill="none" stroke="#c8c0f4" stroke-width="1.7" stroke-linejoin="round"/></svg>
<div style="position:absolute;left:2013.63px;top:647.50px;width:27.21px;height:33.80px;overflow:hidden;font-size:23.8px;font-weight:bold;color:#fff;line-height:1;text-shadow:0 0 1.6px rgba(0,0,0,.5)"><div style="position:absolute;left:0;top:6px;white-space:nowrap;transform-origin:0 0;transform:scaleX(0.8800);">New Employee</div></div>
<div style="position:absolute;left:2012.54px;top:647.20px;width:30px;height:33px;background:linear-gradient(90deg,#8b7eea00,#8b7eeab0)"></div>
<div style="position:absolute;left:1976.83px;top:650.00px;width:4.2px;height:29.5px;background:repeating-linear-gradient(180deg,#fff 0 5.3px,transparent 5.3px 7.7px)"></div>
<div style="position:absolute;left:2047.14px;top:650.00px;width:4.2px;height:29.5px;background:repeating-linear-gradient(180deg,#fff 0 5.3px,transparent 5.3px 7.7px)"></div>
<div style="position:absolute;left:2094.90px;top:645.90px;width:80.71px;height:35.6px;box-sizing:border-box;border:1.3px solid #0c30c8;background:#1640f8"></div>
<svg style="position:absolute;left:2108.10px;top:653.50px" width="24" height="24" viewBox="0 0 24 24"><path d="M11.6 15.2 C5.6 15.6 1.4 12.8 1.4 8.4 C1.4 4.4 5.8 1.4 11.4 1.4 C17.2 1.4 21.2 4.4 21.2 8.2 C21.2 11.6 18.8 13.6 16.2 14.6 L15.2 21.2 L11.6 15.2 Z" fill="none" stroke="#8ea8ff" stroke-width="1.7" stroke-linejoin="round"/></svg>
<div style="position:absolute;left:2134.70px;top:647.50px;width:27.21px;height:33.80px;overflow:hidden;font-size:23.8px;font-weight:bold;color:#fff;line-height:1;text-shadow:0 0 1.6px rgba(0,0,0,.5)"><div style="position:absolute;left:0;top:6px;white-space:nowrap;transform-origin:0 0;transform:scaleX(0.8800);">50% 8:00</div></div>
<div style="position:absolute;left:2133.61px;top:647.20px;width:30px;height:33px;background:linear-gradient(90deg,#1640f800,#1640f8b0)"></div>
<div style="position:absolute;left:2168.21px;top:650.00px;width:4.2px;height:29.5px;background:repeating-linear-gradient(180deg,#fff 0 5.3px,transparent 5.3px 7.7px)"></div>
<div style="position:absolute;left:1893.12px;top:697.70px;width:363.20px;height:35.6px;box-sizing:border-box;border:1.3px solid #8273e0;background:#8b7eea"></div>
<svg style="position:absolute;left:1906.32px;top:705.30px" width="24" height="24" viewBox="0 0 24 24"><path d="M11.6 15.2 C5.6 15.6 1.4 12.8 1.4 8.4 C1.4 4.4 5.8 1.4 11.4 1.4 C17.2 1.4 21.2 4.4 21.2 8.2 C21.2 11.6 18.8 13.6 16.2 14.6 L15.2 21.2 L11.6 15.2 Z" fill="none" stroke="#c8c0f4" stroke-width="1.7" stroke-linejoin="round"/></svg>
<div style="position:absolute;left:1932.92px;top:699.30px;width:309.70px;height:33.80px;overflow:hidden;font-size:23.8px;font-weight:bold;color:#fff;line-height:1;text-shadow:0 0 1.6px rgba(0,0,0,.5)"><div style="position:absolute;left:0;top:6px;white-space:nowrap;transform-origin:0 0;transform:scaleX(0.8800);">New Employee | 100% 8:00 | New employee</div></div>
<div style="position:absolute;left:2214.32px;top:699.00px;width:30px;height:33px;background:linear-gradient(90deg,#8b7eea00,#8b7eeab0)"></div>
<div style="position:absolute;left:1896.12px;top:701.80px;width:4.2px;height:29.5px;background:repeating-linear-gradient(180deg,#fff 0 5.3px,transparent 5.3px 7.7px)"></div>
<div style="position:absolute;left:2248.92px;top:701.80px;width:4.2px;height:29.5px;background:repeating-linear-gradient(180deg,#fff 0 5.3px,transparent 5.3px 7.7px)"></div>
<div style="position:absolute;left:803.50px;top:749.40px;width:726.41px;height:35.6px;box-sizing:border-box;border:1.3px solid #1c5ed8;background:#2674fb"></div>
<svg style="position:absolute;left:816.70px;top:757.00px" width="24" height="24" viewBox="0 0 24 24"><path d="M11.6 15.2 C5.6 15.6 1.4 12.8 1.4 8.4 C1.4 4.4 5.8 1.4 11.4 1.4 C17.2 1.4 21.2 4.4 21.2 8.2 C21.2 11.6 18.8 13.6 16.2 14.6 L15.2 21.2 L11.6 15.2 Z" fill="none" stroke="#9cc4ff" stroke-width="1.7" stroke-linejoin="round"/></svg>
<div style="position:absolute;left:843.30px;top:751.00px;width:672.91px;height:33.80px;overflow:hidden;font-size:23.8px;font-weight:bold;color:#fff;line-height:1;text-shadow:0 0 1.6px rgba(0,0,0,.5)"><div style="position:absolute;left:0;top:6px;white-space:nowrap;transform-origin:0 0;transform:scaleX(0.8800);">Site 999 | Staffing | 100% 16:00 | Problem with the contract</div></div>
<div style="position:absolute;left:1487.91px;top:750.70px;width:30px;height:33px;background:linear-gradient(90deg,#2674fb00,#2674fbb0)"></div>
<div style="position:absolute;left:806.50px;top:753.50px;width:4.2px;height:29.5px;background:repeating-linear-gradient(180deg,#fff 0 5.3px,transparent 5.3px 7.7px)"></div>
<div style="position:absolute;left:1522.51px;top:753.50px;width:4.2px;height:29.5px;background:repeating-linear-gradient(180deg,#fff 0 5.3px,transparent 5.3px 7.7px)"></div>
<div style="position:absolute;left:440.30px;top:801.10px;width:1816.02px;height:35.6px;box-sizing:border-box;border:1.3px solid #6a0c24;background:#8c1636"></div>
<svg style="position:absolute;left:453.50px;top:808.70px" width="24" height="24" viewBox="0 0 24 24"><path d="M11.6 15.2 C5.6 15.6 1.4 12.8 1.4 8.4 C1.4 4.4 5.8 1.4 11.4 1.4 C17.2 1.4 21.2 4.4 21.2 8.2 C21.2 11.6 18.8 13.6 16.2 14.6 L15.2 21.2 L11.6 15.2 Z" fill="none" stroke="#d98aa0" stroke-width="1.7" stroke-linejoin="round"/></svg>
<div style="position:absolute;left:480.10px;top:802.70px;width:1772.52px;height:33.80px;overflow:hidden;font-size:23.8px;font-weight:bold;color:#fff;line-height:1;text-shadow:0 0 1.6px rgba(0,0,0,.5)"><div style="position:absolute;left:0;top:6px;white-space:nowrap;transform-origin:0 0;transform:scaleX(0.8800);">Project #166 | Construction site 1 | 100% 496:00 | Subcontractor will join | 90 0000 USD</div></div>
<div style="position:absolute;left:2214.32px;top:802.40px;width:40px;height:33px;background:linear-gradient(90deg,#8c163600,#8c1636b0)"></div>
<div style="position:absolute;left:440.30px;top:904.50px;width:1816.02px;height:35.6px;box-sizing:border-box;border:1.3px solid #6a0c24;background:#8c1636"></div>
<svg style="position:absolute;left:453.50px;top:912.10px" width="24" height="24" viewBox="0 0 24 24"><path d="M11.6 15.2 C5.6 15.6 1.4 12.8 1.4 8.4 C1.4 4.4 5.8 1.4 11.4 1.4 C17.2 1.4 21.2 4.4 21.2 8.2 C21.2 11.6 18.8 13.6 16.2 14.6 L15.2 21.2 L11.6 15.2 Z" fill="none" stroke="#d98aa0" stroke-width="1.7" stroke-linejoin="round"/></svg>
<div style="position:absolute;left:480.10px;top:906.10px;width:1772.52px;height:33.80px;overflow:hidden;font-size:23.8px;font-weight:bold;color:#fff;line-height:1;text-shadow:0 0 1.6px rgba(0,0,0,.5)"><div style="position:absolute;left:0;top:6px;white-space:nowrap;transform-origin:0 0;transform:scaleX(0.8800);">Project #166 | Sales visit to Japan | 100% 248:00 | Visiting our existing client portfolio</div></div>
<div style="position:absolute;left:2214.32px;top:905.80px;width:40px;height:33px;background:linear-gradient(90deg,#8c163600,#8c1636b0)"></div>
<div style="position:absolute;left:440.30px;top:943.20px;width:1816.02px;height:35.6px;box-sizing:border-box;border:1.3px solid #d8802f;background:#ea9141;background-image:repeating-linear-gradient(-45deg,#e88c3c 0 6px,#f1ab6c 6px 9px)"></div>
<svg style="position:absolute;left:453.50px;top:950.80px" width="24" height="24" viewBox="0 0 24 24"><path d="M11.6 15.2 C5.6 15.6 1.4 12.8 1.4 8.4 C1.4 4.4 5.8 1.4 11.4 1.4 C17.2 1.4 21.2 4.4 21.2 8.2 C21.2 11.6 18.8 13.6 16.2 14.6 L15.2 21.2 L11.6 15.2 Z" fill="none" stroke="#f8cfa8" stroke-width="1.7" stroke-linejoin="round"/></svg>
<div style="position:absolute;left:480.10px;top:944.80px;width:1762.52px;height:33.80px;overflow:hidden;font-size:23.8px;font-weight:bold;color:#fff;line-height:1;text-shadow:0 0 1.6px rgba(0,0,0,.5)"><div style="position:absolute;left:0;top:6px;white-space:nowrap;transform-origin:0 0;transform:scaleX(0.8800);">Project #130 | Research | 100% 40:00 | Working half-time from home</div></div>
<div style="position:absolute;left:443.30px;top:947.30px;width:4.2px;height:29.5px;background:repeating-linear-gradient(180deg,#fff 0 5.3px,transparent 5.3px 7.7px)"></div>
<div style="position:absolute;left:2248.92px;top:947.30px;width:4.2px;height:29.5px;background:repeating-linear-gradient(180deg,#fff 0 5.3px,transparent 5.3px 7.7px)"></div>
<div style="position:absolute;left:440.30px;top:994.60px;width:1089.61px;height:35.6px;box-sizing:border-box;border:1.3px solid #1c5ed8;background:#2674fb"></div>
<svg style="position:absolute;left:453.50px;top:1002.20px" width="24" height="24" viewBox="0 0 24 24"><path d="M11.6 15.2 C5.6 15.6 1.4 12.8 1.4 8.4 C1.4 4.4 5.8 1.4 11.4 1.4 C17.2 1.4 21.2 4.4 21.2 8.2 C21.2 11.6 18.8 13.6 16.2 14.6 L15.2 21.2 L11.6 15.2 Z" fill="none" stroke="#9cc4ff" stroke-width="1.7" stroke-linejoin="round"/></svg>
<div style="position:absolute;left:480.10px;top:996.20px;width:1036.11px;height:33.80px;overflow:hidden;font-size:23.8px;font-weight:bold;color:#fff;line-height:1;text-shadow:0 0 1.6px rgba(0,0,0,.5)"><div style="position:absolute;left:0;top:6px;white-space:nowrap;transform-origin:0 0;transform:scaleX(0.8800);">Site 999 | Site construction | 100% 24:00 | 5000 USD</div></div>
<div style="position:absolute;left:1487.91px;top:995.90px;width:30px;height:33px;background:linear-gradient(90deg,#2674fb00,#2674fbb0)"></div>
<div style="position:absolute;left:443.30px;top:998.70px;width:4.2px;height:29.5px;background:repeating-linear-gradient(180deg,#fff 0 5.3px,transparent 5.3px 7.7px)"></div>
<div style="position:absolute;left:1522.51px;top:998.70px;width:4.2px;height:29.5px;background:repeating-linear-gradient(180deg,#fff 0 5.3px,transparent 5.3px 7.7px)"></div>
<div style="position:absolute;left:440.30px;top:1046.30px;width:1816.02px;height:35.6px;box-sizing:border-box;border:1.3px solid #6a0c24;background:#8c1636"></div>
<svg style="position:absolute;left:453.50px;top:1053.90px" width="24" height="24" viewBox="0 0 24 24"><path d="M11.6 15.2 C5.6 15.6 1.4 12.8 1.4 8.4 C1.4 4.4 5.8 1.4 11.4 1.4 C17.2 1.4 21.2 4.4 21.2 8.2 C21.2 11.6 18.8 13.6 16.2 14.6 L15.2 21.2 L11.6 15.2 Z" fill="none" stroke="#d98aa0" stroke-width="1.7" stroke-linejoin="round"/></svg>
<div style="position:absolute;left:480.10px;top:1047.90px;width:1772.52px;height:33.80px;overflow:hidden;font-size:23.8px;font-weight:bold;color:#fff;line-height:1;text-shadow:0 0 1.6px rgba(0,0,0,.5)"><div style="position:absolute;left:0;top:6px;white-space:nowrap;transform-origin:0 0;transform:scaleX(0.8800);">Project #166 | Editing | 100% 288:00 | Resource is available</div></div>
<div style="position:absolute;left:2214.32px;top:1047.60px;width:40px;height:33px;background:linear-gradient(90deg,#8c163600,#8c1636b0)"></div>
<div style="position:absolute;left:440.30px;top:1098.00px;width:726.41px;height:35.6px;box-sizing:border-box;border:1.3px solid #2a8ad8;background:#339ff2"></div>
<svg style="position:absolute;left:453.50px;top:1105.60px" width="24" height="24" viewBox="0 0 24 24"><path d="M11.6 15.2 C5.6 15.6 1.4 12.8 1.4 8.4 C1.4 4.4 5.8 1.4 11.4 1.4 C17.2 1.4 21.2 4.4 21.2 8.2 C21.2 11.6 18.8 13.6 16.2 14.6 L15.2 21.2 L11.6 15.2 Z" fill="none" stroke="#a6d6ff" stroke-width="1.7" stroke-linejoin="round"/></svg>
<div style="position:absolute;left:480.10px;top:1099.60px;width:672.91px;height:33.80px;overflow:hidden;font-size:23.8px;font-weight:bold;color:#fff;line-height:1;text-shadow:0 0 1.6px rgba(0,0,0,.5)"><div style="position:absolute;left:0;top:6px;white-space:nowrap;transform-origin:0 0;transform:scaleX(0.8800);">HTML works (postponed) | Booked | 100% 16:00</div></div>
<div style="position:absolute;left:1124.71px;top:1099.30px;width:30px;height:33px;background:linear-gradient(90deg,#339ff200,#339ff2b0)"></div>
<div style="position:absolute;left:443.30px;top:1102.10px;width:4.2px;height:29.5px;background:repeating-linear-gradient(180deg,#fff 0 5.3px,transparent 5.3px 7.7px)"></div>
<div style="position:absolute;left:1159.31px;top:1102.10px;width:4.2px;height:29.5px;background:repeating-linear-gradient(180deg,#fff 0 5.3px,transparent 5.3px 7.7px)"></div>
<div style="position:absolute;left:803.50px;top:1149.80px;width:1089.61px;height:35.6px;box-sizing:border-box;border:1.3px solid #1c5ed8;background:#2674fb"></div>
<svg style="position:absolute;left:816.70px;top:1157.40px" width="24" height="24" viewBox="0 0 24 24"><path d="M11.6 15.2 C5.6 15.6 1.4 12.8 1.4 8.4 C1.4 4.4 5.8 1.4 11.4 1.4 C17.2 1.4 21.2 4.4 21.2 8.2 C21.2 11.6 18.8 13.6 16.2 14.6 L15.2 21.2 L11.6 15.2 Z" fill="none" stroke="#9cc4ff" stroke-width="1.7" stroke-linejoin="round"/></svg>
<div style="position:absolute;left:843.30px;top:1151.40px;width:1036.11px;height:33.80px;overflow:hidden;font-size:23.8px;font-weight:bold;color:#fff;line-height:1;text-shadow:0 0 1.6px rgba(0,0,0,.5)"><div style="position:absolute;left:0;top:6px;white-space:nowrap;transform-origin:0 0;transform:scaleX(0.8800);">Site 999 | Booked | 100% 24:00</div></div>
<div style="position:absolute;left:1851.12px;top:1151.10px;width:30px;height:33px;background:linear-gradient(90deg,#2674fb00,#2674fbb0)"></div>
<div style="position:absolute;left:806.50px;top:1153.90px;width:4.2px;height:29.5px;background:repeating-linear-gradient(180deg,#fff 0 5.3px,transparent 5.3px 7.7px)"></div>
<div style="position:absolute;left:1885.72px;top:1153.90px;width:4.2px;height:29.5px;background:repeating-linear-gradient(180deg,#fff 0 5.3px,transparent 5.3px 7.7px)"></div>
<svg style="position:absolute;left:1500px;top:690px" width="420" height="90" viewBox="1500 690 420 90">
<path d="M1530 761.6 C1690 761.6 1700 710.4 1888 710.4" fill="none" stroke="#adadad" stroke-width="2.6"/>
<path d="M1887 704.6 L1896.5 710.4 L1887 716.2 Z" fill="#adadad"/>
</svg>
<svg style="position:absolute;left:14px;top:92px;filter:drop-shadow(0 0 1px #000) drop-shadow(0 0 1px #000)" width="44" height="42" viewBox="14 92 44 42"><path d="M35.5 97 V128 M20 112.5 H51" stroke="#e6e6e6" stroke-width="8.6"/></svg>
<svg style="position:absolute;left:12px;top:164px;filter:drop-shadow(0 0 1px #000) drop-shadow(0 0 1px #000)" width="46" height="46" viewBox="12 164 46 46"><polygon points="35.20,172.00 39.67,183.45 51.94,184.16 42.43,191.95 45.55,203.84 35.20,197.20 24.85,203.84 27.97,191.95 18.46,184.16 30.73,183.45" fill="none" stroke="#e6e6e6" stroke-width="2.8" stroke-linejoin="round"/></svg>
<svg style="position:absolute;left:18px;top:240px;filter:drop-shadow(0 0 1px #000) drop-shadow(0 0 1px #000)" width="36" height="42" viewBox="18 240 36 42"><path d="M24.6 247.6 H38.6 L46 255.8 V275.4 H24.6 Z" fill="none" stroke="#e6e6e6" stroke-width="2.8" stroke-linejoin="round"/></svg>
<svg style="position:absolute;left:14px;top:316px;filter:drop-shadow(0 0 1px #000) drop-shadow(0 0 1px #000)" width="44" height="40" viewBox="14 316 44 40"><path d="M21.6 324.2 H30.6 L34.4 329.2 H49.6 V347.6 H21.6 Z" fill="none" stroke="#e6e6e6" stroke-width="2.8" stroke-linejoin="round"/></svg>
<svg style="position:absolute;left:16px;top:390px;filter:drop-shadow(0 0 1px #000) drop-shadow(0 0 1px #000)" width="40" height="40" viewBox="16 390 40 40"><path d="M35.6 396.6 C31 402 24.4 408 24.4 413.4 C24.4 419.8 29.4 424 35.6 424 C41.8 424 46.8 419.8 46.8 413.4 C46.8 408 40.2 402 35.6 396.6 Z" fill="none" stroke="#e6e6e6" stroke-width="2.8" stroke-linejoin="round"/></svg>
<svg style="position:absolute;left:14px;top:462px;filter:drop-shadow(0 0 1px #000) drop-shadow(0 0 1px #000)" width="44" height="42" viewBox="14 462 44 42"><path d="M35.6 470 C39.6 470 42 473 42 477.4 C42 481 40.4 483.6 39 485.2 C44.6 486.6 49.6 490.4 49.6 494.6 C49.6 496.8 48.4 497.6 46.4 497.6 H24.8 C22.8 497.6 21.6 496.8 21.6 494.6 C21.6 490.4 26.6 486.6 32.2 485.2 C30.8 483.6 29.2 481 29.2 477.4 C29.2 473 31.6 470 35.6 470 Z" fill="none" stroke="#e6e6e6" stroke-width="2.8" stroke-linejoin="round"/></svg>
<svg style="position:absolute;left:14px;top:538px;filter:drop-shadow(0 0 1px #000) drop-shadow(0 0 1px #000)" width="44" height="42" viewBox="14 538 44 42"><path d="M32 572.6 H21.6 V544.6 H49.6 V572.6 H39.2" fill="none" stroke="#e6e6e6" stroke-width="2.8"/><path d="M35.6 574.4 V556" stroke="#e6e6e6" stroke-width="3"/><path d="M30.4 561.4 L35.6 555.4 L40.8 561.4" fill="none" stroke="#e6e6e6" stroke-width="2.8"/></svg>
<svg style="position:absolute;left:14px;top:612px;filter:drop-shadow(0 0 1px #000) drop-shadow(0 0 1px #000)" width="44" height="42" viewBox="14 612 44 42"><path d="M35.6 619.6 C43.8 619.6 49.6 624 49.6 630 C49.6 636 43.8 640.2 37.8 640.4 L33 647 L33.4 640.2 C26.6 639.4 21.6 635.6 21.6 630 C21.6 624 27.4 619.6 35.6 619.6 Z" fill="none" stroke="#e6e6e6" stroke-width="2.6" stroke-linejoin="round"/><path d="M32 627.4 C32 624.6 34 623.6 35.8 623.6 C38 623.6 39.6 625 39.6 627 C39.6 629.8 36 630 36 633" fill="none" stroke="#e6e6e6" stroke-width="2.4"/><circle cx="36" cy="636.8" r="1.5" fill="#e6e6e6"/></svg>
<svg style="position:absolute;left:14px;top:686px;filter:drop-shadow(0 0 1px #000) drop-shadow(0 0 1px #000)" width="44" height="42" viewBox="14 686 44 42"><polygon points="49.33,702.42 49.94,705.51 45.96,707.74 45.51,709.98 48.34,713.56 46.59,716.17 42.20,714.93 40.30,716.20 39.78,720.73 36.69,721.34 34.46,717.36 32.22,716.91 28.64,719.74 26.03,717.99 27.27,713.60 26.00,711.70 21.47,711.18 20.86,708.09 24.84,705.86 25.29,703.62 22.46,700.04 24.21,697.43 28.60,698.67 30.50,697.40 31.02,692.87 34.11,692.26 36.34,696.24 38.58,696.69 42.16,693.86 44.77,695.61 43.53,700.00 44.80,701.90" fill="none" stroke="#e6e6e6" stroke-width="2.6" stroke-linejoin="round"/><rect x="31" y="702.4" width="8.8" height="8.8" fill="none" stroke="#e6e6e6" stroke-width="2.6"/></svg>
</body></html>
